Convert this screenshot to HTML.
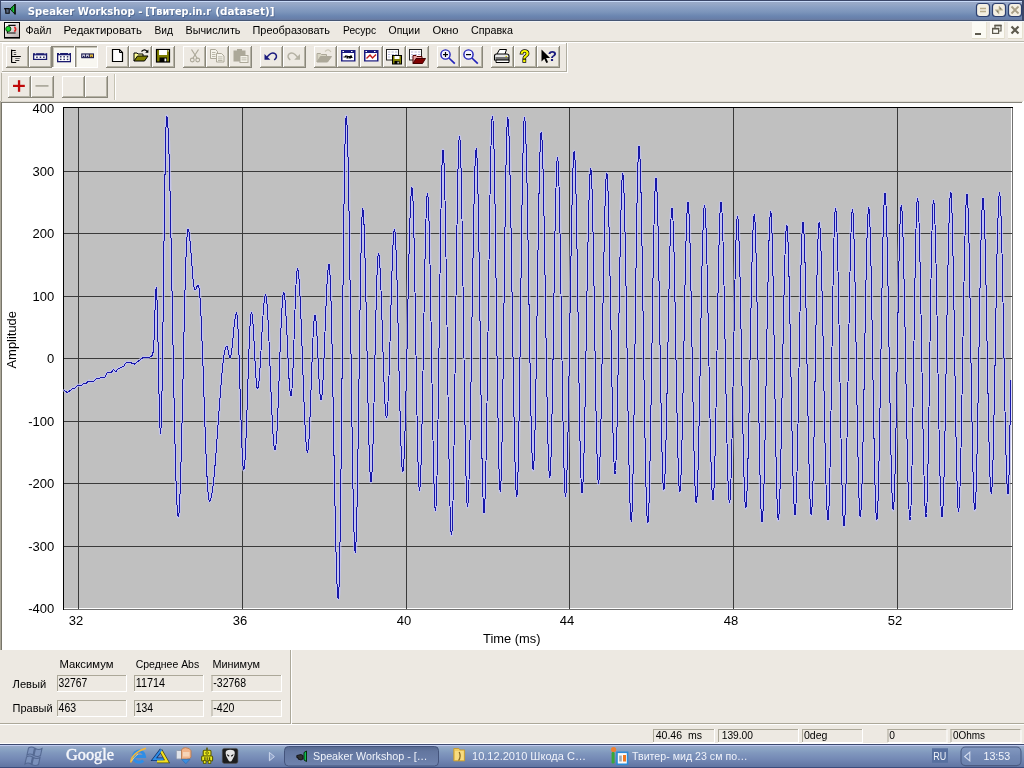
<!DOCTYPE html>
<html lang="ru"><head><meta charset="utf-8"><title>Speaker Workshop - [Твитер.in.r (dataset)]</title>
<style>
html,body{margin:0;padding:0;background:#ece9d8;overflow:hidden}
#screen{position:relative;width:1024px;height:768px;overflow:hidden;font-family:"Liberation Sans",sans-serif}
#screen>div{position:absolute}
#ov{position:absolute;left:0;top:0;will-change:transform}
text{white-space:pre}
</style></head><body><div id="screen">
<div style="left:0px;top:0px;width:1024px;height:768px;background:#ede9e2;"></div>
<div style="left:0px;top:0px;width:1024px;height:21px;background:linear-gradient(#3a4668 0px,#3a4668 1px,#c8daf8 1px,#c8daf8 2px,#98a8c8 2px,#9aaac8 3px,#8ba0c4 7px,#7c95bb 12px,#6b86b1 16px,#687ea8 19px,#6a7a9c 20px,#465674 20px,#465674 21px);"></div>
<div style="left:0px;top:0px;width:1px;height:21px;background:#3a4668;"></div>
<div style="left:1022px;top:0px;width:2px;height:21px;background:#3a4668;"></div>
<div style="left:0px;top:21px;width:1024px;height:20px;background:#ede9e2;"></div>
<div style="left:0px;top:21px;width:1024px;height:1px;background:#f2f4f6;"></div>
<div style="left:0px;top:41px;width:1024px;height:1px;background:#b9b6aa;"></div>
<div style="left:0px;top:42px;width:1024px;height:1px;background:#ffffff;"></div>
<div style="left:0px;top:43px;width:1024px;height:58px;background:#ede9e2;"></div>
<div style="left:0px;top:101px;width:1024px;height:549px;background:#ffffff;"></div>
<div style="left:0px;top:101px;width:1023px;height:1px;background:#dcd9d0;"></div>
<div style="left:0px;top:102px;width:1022px;height:1px;background:#85837a;"></div>
<div style="left:0px;top:101px;width:1px;height:549px;background:#aca899;"></div>
<div style="left:1px;top:102px;width:1px;height:548px;background:#77756a;"></div>
<div style="left:0px;top:650px;width:1024px;height:74px;background:#ede9e2;"></div>
<div style="left:0px;top:724px;width:1024px;height:19px;background:#ede9e2;"></div>
<div style="left:0px;top:723px;width:1024px;height:1px;background:#aca899;"></div>
<div style="left:0px;top:724px;width:1024px;height:1px;background:#ffffff;"></div>
<div style="left:0px;top:743px;width:1024px;height:1px;background:#ffffff;"></div>
<div style="left:0px;top:744px;width:1024px;height:24px;background:linear-gradient(#3e4a70 0px,#3e4a70 1px,#c0ccf0 1px,#c0ccf0 2px,#9aaaca 2px,#8ba4c4 5px,#8097bd 9px,#7489b5 15px,#6579a6 21px,#6076a2 23px,#3c4c7c 23px,#3c4c7c 24px);"></div>
<svg id="ov" width="1024" height="768" viewBox="0 0 1024 768">
<defs><linearGradient id="gdi" x1="0" y1="0" x2="1" y2="1"><stop offset="0" stop-color="#ffffff"/><stop offset="0.5" stop-color="#dcd6d4"/><stop offset="1" stop-color="#b8aeae"/></linearGradient><linearGradient id="gab" x1="0" y1="0" x2="0" y2="1"><stop offset="0" stop-color="#56688f"/><stop offset="0.25" stop-color="#63769f"/><stop offset="1" stop-color="#6f83ae"/></linearGradient><linearGradient id="gtr" x1="0" y1="0" x2="0" y2="1"><stop offset="0" stop-color="#8399c0"/><stop offset="0.5" stop-color="#7389b4"/><stop offset="1" stop-color="#6a80ac"/></linearGradient></defs>
<g><path d="M15 4.2 L15 14.2 L10 9 Z" fill="#18c838" stroke="#0a1a0a" stroke-width="1"/><rect x="14.4" y="4" width="1.3" height="10.4" fill="#0a0a0a"/><path d="M4.8 8.6 H9.2 V13.3 H5.8 V10.6 L4.8 8.6 Z" fill="#5a6a86" stroke="#0a0a0a" stroke-width="1.1"/><path d="M12.3 6.5 V11.8" stroke="#0a6a1a" stroke-width="0.9"/></g>
<text x="28.6" y="15.9" font-size="11.3" font-family='"DejaVu Sans", "Liberation Sans", sans-serif' font-weight="bold" fill="#34466f" text-anchor="start" textLength="114.7" lengthAdjust="spacingAndGlyphs" opacity="0.5">Speaker Workshop -</text>
<text x="27.8" y="15" font-size="11.3" font-family='"DejaVu Sans", "Liberation Sans", sans-serif' font-weight="bold" fill="#ffffff" text-anchor="start" textLength="114.7" lengthAdjust="spacingAndGlyphs" >Speaker Workshop -</text>
<text x="146.0" y="15.9" font-size="11.3" font-family='"DejaVu Sans", "Liberation Sans", sans-serif' font-weight="bold" fill="#34466f" text-anchor="start" textLength="65.8" lengthAdjust="spacingAndGlyphs" opacity="0.5">[Твитер.in.r</text>
<text x="145.2" y="15" font-size="11.3" font-family='"DejaVu Sans", "Liberation Sans", sans-serif' font-weight="bold" fill="#ffffff" text-anchor="start" textLength="65.8" lengthAdjust="spacingAndGlyphs" >[Твитер.in.r</text>
<text x="216.10000000000002" y="15.9" font-size="11.3" font-family='"DejaVu Sans", "Liberation Sans", sans-serif' font-weight="bold" fill="#34466f" text-anchor="start" textLength="59.2" lengthAdjust="spacingAndGlyphs" opacity="0.5">(dataset)]</text>
<text x="215.3" y="15" font-size="11.3" font-family='"DejaVu Sans", "Liberation Sans", sans-serif' font-weight="bold" fill="#ffffff" text-anchor="start" textLength="59.2" lengthAdjust="spacingAndGlyphs" >(dataset)]</text>
<rect x="976.5" y="3.5" width="13" height="13" rx="3" ry="3" fill="#f3efe2" stroke="#2c3f6f" stroke-width="1.2"/>
<rect x="992.5" y="3.5" width="13" height="13" rx="3" ry="3" fill="#f3efe2" stroke="#2c3f6f" stroke-width="1.2"/>
<rect x="1008.5" y="3.5" width="13" height="13" rx="3" ry="3" fill="#f3efe2" stroke="#2c3f6f" stroke-width="1.2"/>
<path d="M980 8.5h6M980 11.5h6" stroke="#b9ad8c" stroke-width="1.6" fill="none"/>
<path d="M999 5.8 L1003 10.2 L999 10.2 Z M999 14.2 L995 9.8 L999 9.8 Z" fill="#7d7966"/><path d="M995 10 H1003 M999 6 V14" stroke="#d8cfae" stroke-width="1" fill="none"/>
<path d="M1011.5 6.5 L1018.5 13.5 M1018.5 6.5 L1011.5 13.5" stroke="#a89f86" stroke-width="1.8" fill="none"/>
<rect x="4" y="22" width="16" height="16.6" fill="#000" />
<rect x="5" y="23" width="14" height="14" fill="url(#gdi)" />
<path d="M8.3 25.4 H15.6 M15.6 33 H7.4 V31" fill="none" stroke="#0a0a0a" stroke-width="1.1" />
<circle cx="8.3" cy="28.9" r="2.6" fill="#14d428" stroke="#0a3a0a" stroke-width="0.9"/>
<path d="M14.4 27 q2.6 2.2 0 4.6" fill="none" stroke="#e02424" stroke-width="1.7" />
<text x="25.5" y="34" font-size="11" font-family='"Liberation Sans", sans-serif' font-weight="normal" fill="#000" text-anchor="start" textLength="26.0" lengthAdjust="spacingAndGlyphs" >Файл</text>
<text x="63.5" y="34" font-size="11" font-family='"Liberation Sans", sans-serif' font-weight="normal" fill="#000" text-anchor="start" textLength="78.5" lengthAdjust="spacingAndGlyphs" >Редактировать</text>
<text x="154.5" y="34" font-size="11" font-family='"Liberation Sans", sans-serif' font-weight="normal" fill="#000" text-anchor="start" textLength="18.5" lengthAdjust="spacingAndGlyphs" >Вид</text>
<text x="185.5" y="34" font-size="11" font-family='"Liberation Sans", sans-serif' font-weight="normal" fill="#000" text-anchor="start" textLength="55.0" lengthAdjust="spacingAndGlyphs" >Вычислить</text>
<text x="252.5" y="34" font-size="11" font-family='"Liberation Sans", sans-serif' font-weight="normal" fill="#000" text-anchor="start" textLength="77.5" lengthAdjust="spacingAndGlyphs" >Преобразовать</text>
<text x="343" y="34" font-size="11" font-family='"Liberation Sans", sans-serif' font-weight="normal" fill="#000" text-anchor="start" textLength="33" lengthAdjust="spacingAndGlyphs" >Ресурс</text>
<text x="388.5" y="34" font-size="11" font-family='"Liberation Sans", sans-serif' font-weight="normal" fill="#000" text-anchor="start" textLength="31.5" lengthAdjust="spacingAndGlyphs" >Опции</text>
<text x="432.5" y="34" font-size="11" font-family='"Liberation Sans", sans-serif' font-weight="normal" fill="#000" text-anchor="start" textLength="26.0" lengthAdjust="spacingAndGlyphs" >Окно</text>
<text x="471" y="34" font-size="11" font-family='"Liberation Sans", sans-serif' font-weight="normal" fill="#000" text-anchor="start" textLength="42" lengthAdjust="spacingAndGlyphs" >Справка</text>
<rect x="972" y="22" width="15" height="17" fill="#fbfaf4" />
<rect x="972" y="38" width="15" height="1" fill="#e0dccb" />
<rect x="986" y="22" width="1" height="17" fill="#e6e2d2" />
<rect x="990" y="22" width="15" height="17" fill="#fbfaf4" />
<rect x="990" y="38" width="15" height="1" fill="#e0dccb" />
<rect x="1004" y="22" width="1" height="17" fill="#e6e2d2" />
<rect x="1008" y="22" width="15" height="17" fill="#fbfaf4" />
<rect x="1008" y="38" width="15" height="1" fill="#e0dccb" />
<rect x="1022" y="22" width="1" height="17" fill="#e6e2d2" />
<rect x="975" y="33" width="6" height="2" fill="#5d5a4e" />
<path d="M995 28 V25.6 H1001 V31 H999" stroke="#5d5a4e" stroke-width="1.2" fill="none"/><rect x="994.4" y="24.6" width="7.2" height="1.6" fill="#5d5a4e"/><rect x="992.6" y="28.6" width="6" height="4.8" stroke="#5d5a4e" stroke-width="1.2" fill="none"/><rect x="992" y="27.8" width="7.2" height="1.6" fill="#5d5a4e"/>
<path d="M1011.5 26.5 L1018.5 33.5 M1018.5 26.5 L1011.5 33.5" stroke="#5d5a4e" stroke-width="2.2" fill="none"/>
<rect x="2" y="43" width="565" height="1" fill="#ffffff" />
<rect x="2" y="71" width="565" height="1" fill="#b0ada0" />
<rect x="566" y="43" width="1" height="29" fill="#b0ada0" />
<rect x="567" y="43" width="1" height="30" fill="#ffffff" />
<rect x="2" y="44" width="1" height="27" fill="#ffffff" />
<rect x="6" y="46" width="23" height="22" fill="#ede9e2" />
<rect x="6" y="46" width="22" height="1" fill="#ffffff" />
<rect x="6" y="46" width="1" height="21" fill="#ffffff" />
<rect x="28" y="46" width="1" height="22" fill="#8a877b" />
<rect x="6" y="67" width="23" height="1" fill="#8a877b" />
<rect x="27" y="47" width="1" height="20" fill="#b5b2a4" />
<rect x="7" y="66" width="21" height="1" fill="#b5b2a4" />
<rect x="29" y="46" width="23" height="22" fill="#ede9e2" />
<rect x="29" y="46" width="22" height="1" fill="#ffffff" />
<rect x="29" y="46" width="1" height="21" fill="#ffffff" />
<rect x="51" y="46" width="1" height="22" fill="#8a877b" />
<rect x="29" y="67" width="23" height="1" fill="#8a877b" />
<rect x="50" y="47" width="1" height="20" fill="#b5b2a4" />
<rect x="30" y="66" width="21" height="1" fill="#b5b2a4" />
<rect x="52" y="46" width="23" height="22" fill="#f8f7f1" />
<rect x="52" y="46" width="23" height="1" fill="#8a877b" />
<rect x="52" y="46" width="1" height="22" fill="#8a877b" />
<rect x="53" y="47" width="21" height="1" fill="#c9c6b8" />
<rect x="53" y="47" width="1" height="20" fill="#c9c6b8" />
<rect x="74" y="46" width="1" height="22" fill="#ffffff" />
<rect x="52" y="67" width="23" height="1" fill="#ffffff" />
<rect x="75" y="46" width="23" height="22" fill="#f8f7f1" />
<rect x="75" y="46" width="23" height="1" fill="#8a877b" />
<rect x="75" y="46" width="1" height="22" fill="#8a877b" />
<rect x="76" y="47" width="21" height="1" fill="#c9c6b8" />
<rect x="76" y="47" width="1" height="20" fill="#c9c6b8" />
<rect x="97" y="46" width="1" height="22" fill="#ffffff" />
<rect x="75" y="67" width="23" height="1" fill="#ffffff" />
<rect x="106" y="46" width="23" height="22" fill="#ede9e2" />
<rect x="106" y="46" width="22" height="1" fill="#ffffff" />
<rect x="106" y="46" width="1" height="21" fill="#ffffff" />
<rect x="128" y="46" width="1" height="22" fill="#8a877b" />
<rect x="106" y="67" width="23" height="1" fill="#8a877b" />
<rect x="127" y="47" width="1" height="20" fill="#b5b2a4" />
<rect x="107" y="66" width="21" height="1" fill="#b5b2a4" />
<rect x="129" y="46" width="23" height="22" fill="#ede9e2" />
<rect x="129" y="46" width="22" height="1" fill="#ffffff" />
<rect x="129" y="46" width="1" height="21" fill="#ffffff" />
<rect x="151" y="46" width="1" height="22" fill="#8a877b" />
<rect x="129" y="67" width="23" height="1" fill="#8a877b" />
<rect x="150" y="47" width="1" height="20" fill="#b5b2a4" />
<rect x="130" y="66" width="21" height="1" fill="#b5b2a4" />
<rect x="152" y="46" width="23" height="22" fill="#ede9e2" />
<rect x="152" y="46" width="22" height="1" fill="#ffffff" />
<rect x="152" y="46" width="1" height="21" fill="#ffffff" />
<rect x="174" y="46" width="1" height="22" fill="#8a877b" />
<rect x="152" y="67" width="23" height="1" fill="#8a877b" />
<rect x="173" y="47" width="1" height="20" fill="#b5b2a4" />
<rect x="153" y="66" width="21" height="1" fill="#b5b2a4" />
<rect x="183" y="46" width="23" height="22" fill="#ede9e2" />
<rect x="183" y="46" width="22" height="1" fill="#ffffff" />
<rect x="183" y="46" width="1" height="21" fill="#ffffff" />
<rect x="205" y="46" width="1" height="22" fill="#8a877b" />
<rect x="183" y="67" width="23" height="1" fill="#8a877b" />
<rect x="204" y="47" width="1" height="20" fill="#b5b2a4" />
<rect x="184" y="66" width="21" height="1" fill="#b5b2a4" />
<rect x="206" y="46" width="23" height="22" fill="#ede9e2" />
<rect x="206" y="46" width="22" height="1" fill="#ffffff" />
<rect x="206" y="46" width="1" height="21" fill="#ffffff" />
<rect x="228" y="46" width="1" height="22" fill="#8a877b" />
<rect x="206" y="67" width="23" height="1" fill="#8a877b" />
<rect x="227" y="47" width="1" height="20" fill="#b5b2a4" />
<rect x="207" y="66" width="21" height="1" fill="#b5b2a4" />
<rect x="229" y="46" width="23" height="22" fill="#ede9e2" />
<rect x="229" y="46" width="22" height="1" fill="#ffffff" />
<rect x="229" y="46" width="1" height="21" fill="#ffffff" />
<rect x="251" y="46" width="1" height="22" fill="#8a877b" />
<rect x="229" y="67" width="23" height="1" fill="#8a877b" />
<rect x="250" y="47" width="1" height="20" fill="#b5b2a4" />
<rect x="230" y="66" width="21" height="1" fill="#b5b2a4" />
<rect x="260" y="46" width="23" height="22" fill="#ede9e2" />
<rect x="260" y="46" width="22" height="1" fill="#ffffff" />
<rect x="260" y="46" width="1" height="21" fill="#ffffff" />
<rect x="282" y="46" width="1" height="22" fill="#8a877b" />
<rect x="260" y="67" width="23" height="1" fill="#8a877b" />
<rect x="281" y="47" width="1" height="20" fill="#b5b2a4" />
<rect x="261" y="66" width="21" height="1" fill="#b5b2a4" />
<rect x="283" y="46" width="23" height="22" fill="#ede9e2" />
<rect x="283" y="46" width="22" height="1" fill="#ffffff" />
<rect x="283" y="46" width="1" height="21" fill="#ffffff" />
<rect x="305" y="46" width="1" height="22" fill="#8a877b" />
<rect x="283" y="67" width="23" height="1" fill="#8a877b" />
<rect x="304" y="47" width="1" height="20" fill="#b5b2a4" />
<rect x="284" y="66" width="21" height="1" fill="#b5b2a4" />
<rect x="314" y="46" width="23" height="22" fill="#ede9e2" />
<rect x="314" y="46" width="22" height="1" fill="#ffffff" />
<rect x="314" y="46" width="1" height="21" fill="#ffffff" />
<rect x="336" y="46" width="1" height="22" fill="#8a877b" />
<rect x="314" y="67" width="23" height="1" fill="#8a877b" />
<rect x="335" y="47" width="1" height="20" fill="#b5b2a4" />
<rect x="315" y="66" width="21" height="1" fill="#b5b2a4" />
<rect x="337" y="46" width="23" height="22" fill="#ede9e2" />
<rect x="337" y="46" width="22" height="1" fill="#ffffff" />
<rect x="337" y="46" width="1" height="21" fill="#ffffff" />
<rect x="359" y="46" width="1" height="22" fill="#8a877b" />
<rect x="337" y="67" width="23" height="1" fill="#8a877b" />
<rect x="358" y="47" width="1" height="20" fill="#b5b2a4" />
<rect x="338" y="66" width="21" height="1" fill="#b5b2a4" />
<rect x="360" y="46" width="23" height="22" fill="#ede9e2" />
<rect x="360" y="46" width="22" height="1" fill="#ffffff" />
<rect x="360" y="46" width="1" height="21" fill="#ffffff" />
<rect x="382" y="46" width="1" height="22" fill="#8a877b" />
<rect x="360" y="67" width="23" height="1" fill="#8a877b" />
<rect x="381" y="47" width="1" height="20" fill="#b5b2a4" />
<rect x="361" y="66" width="21" height="1" fill="#b5b2a4" />
<rect x="383" y="46" width="23" height="22" fill="#ede9e2" />
<rect x="383" y="46" width="22" height="1" fill="#ffffff" />
<rect x="383" y="46" width="1" height="21" fill="#ffffff" />
<rect x="405" y="46" width="1" height="22" fill="#8a877b" />
<rect x="383" y="67" width="23" height="1" fill="#8a877b" />
<rect x="404" y="47" width="1" height="20" fill="#b5b2a4" />
<rect x="384" y="66" width="21" height="1" fill="#b5b2a4" />
<rect x="406" y="46" width="23" height="22" fill="#ede9e2" />
<rect x="406" y="46" width="22" height="1" fill="#ffffff" />
<rect x="406" y="46" width="1" height="21" fill="#ffffff" />
<rect x="428" y="46" width="1" height="22" fill="#8a877b" />
<rect x="406" y="67" width="23" height="1" fill="#8a877b" />
<rect x="427" y="47" width="1" height="20" fill="#b5b2a4" />
<rect x="407" y="66" width="21" height="1" fill="#b5b2a4" />
<rect x="437" y="46" width="23" height="22" fill="#ede9e2" />
<rect x="437" y="46" width="22" height="1" fill="#ffffff" />
<rect x="437" y="46" width="1" height="21" fill="#ffffff" />
<rect x="459" y="46" width="1" height="22" fill="#8a877b" />
<rect x="437" y="67" width="23" height="1" fill="#8a877b" />
<rect x="458" y="47" width="1" height="20" fill="#b5b2a4" />
<rect x="438" y="66" width="21" height="1" fill="#b5b2a4" />
<rect x="460" y="46" width="23" height="22" fill="#ede9e2" />
<rect x="460" y="46" width="22" height="1" fill="#ffffff" />
<rect x="460" y="46" width="1" height="21" fill="#ffffff" />
<rect x="482" y="46" width="1" height="22" fill="#8a877b" />
<rect x="460" y="67" width="23" height="1" fill="#8a877b" />
<rect x="481" y="47" width="1" height="20" fill="#b5b2a4" />
<rect x="461" y="66" width="21" height="1" fill="#b5b2a4" />
<rect x="491" y="46" width="23" height="22" fill="#ede9e2" />
<rect x="491" y="46" width="22" height="1" fill="#ffffff" />
<rect x="491" y="46" width="1" height="21" fill="#ffffff" />
<rect x="513" y="46" width="1" height="22" fill="#8a877b" />
<rect x="491" y="67" width="23" height="1" fill="#8a877b" />
<rect x="512" y="47" width="1" height="20" fill="#b5b2a4" />
<rect x="492" y="66" width="21" height="1" fill="#b5b2a4" />
<rect x="514" y="46" width="23" height="22" fill="#ede9e2" />
<rect x="514" y="46" width="22" height="1" fill="#ffffff" />
<rect x="514" y="46" width="1" height="21" fill="#ffffff" />
<rect x="536" y="46" width="1" height="22" fill="#8a877b" />
<rect x="514" y="67" width="23" height="1" fill="#8a877b" />
<rect x="535" y="47" width="1" height="20" fill="#b5b2a4" />
<rect x="515" y="66" width="21" height="1" fill="#b5b2a4" />
<rect x="537" y="46" width="23" height="22" fill="#ede9e2" />
<rect x="537" y="46" width="22" height="1" fill="#ffffff" />
<rect x="537" y="46" width="1" height="21" fill="#ffffff" />
<rect x="559" y="46" width="1" height="22" fill="#8a877b" />
<rect x="537" y="67" width="23" height="1" fill="#8a877b" />
<rect x="558" y="47" width="1" height="20" fill="#b5b2a4" />
<rect x="538" y="66" width="21" height="1" fill="#b5b2a4" />
<rect x="11" y="49.6" width="1.2" height="13.2" fill="#000" />
<rect x="12" y="50" width="3.6999999999999993" height="1.0" fill="#000" />
<rect x="13.7" y="52" width="2.5" height="1.0" fill="#707070" />
<rect x="13.7" y="54" width="2.5" height="1.0" fill="#404040" />
<rect x="12" y="56" width="8.8" height="1.0" fill="#000" />
<rect x="15.2" y="58" width="4.600000000000001" height="1.0" fill="#707070" />
<rect x="15.2" y="60" width="4.100000000000001" height="1.0" fill="#303030" />
<rect x="12" y="62" width="4.199999999999999" height="1.0" fill="#000" />
<rect x="33" y="53.2" width="14.2" height="6.8" fill="#1a1a6e" />
<rect x="34.3" y="55.4" width="11.6" height="3.4" fill="#ffffff" />
<rect x="36.2" y="56.5" width="1.5" height="1.5" fill="#2a2a5e" />
<rect x="39.7" y="56.5" width="1.5" height="1.5" fill="#2a2a5e" />
<rect x="43.1" y="56.5" width="1.5" height="1.5" fill="#2a2a5e" />
<rect x="35" y="53.2" width="1.1" height="1" fill="#e8e8f4" />
<rect x="44.4" y="53.2" width="1.1" height="1" fill="#e8e8f4" />
<rect x="57" y="53" width="14" height="9.3" fill="#1a1a6e" />
<rect x="58.3" y="55.3" width="11.5" height="5.7" fill="#ffffff" />
<rect x="60" y="56.1" width="1.5" height="1.4" fill="#2a2a5e" />
<rect x="60" y="58.7" width="1.5" height="1.4" fill="#2a2a5e" />
<rect x="63.4" y="56.1" width="1.5" height="1.4" fill="#2a2a5e" />
<rect x="63.4" y="58.7" width="1.5" height="1.4" fill="#2a2a5e" />
<rect x="66.8" y="56.1" width="1.5" height="1.4" fill="#2a2a5e" />
<rect x="66.8" y="58.7" width="1.5" height="1.4" fill="#2a2a5e" />
<rect x="59" y="53" width="1.1" height="1" fill="#e8e8f4" />
<rect x="68.2" y="53" width="1.1" height="1" fill="#e8e8f4" />
<rect x="81.2" y="53.4" width="12.8" height="4.8" fill="#1a1a4e" />
<rect x="82.3" y="54.5" width="2.8" height="2.6" fill="#e0e0ee" />
<rect x="86" y="54.5" width="2.8" height="2.6" fill="#e0e0ee" />
<rect x="89.8" y="54.5" width="3.2" height="2.6" fill="#e8c040" />
<rect x="83" y="55.8" width="1.4" height="1.3" fill="#1a1a4e" />
<rect x="86.7" y="55.8" width="1.4" height="1.3" fill="#1a1a4e" />
<rect x="90.7" y="55.8" width="1.4" height="1.3" fill="#7a5a10" />
<path d="M112.5 49.5 h7 l3 3 v9 h-10 Z" fill="#ffffff" stroke="#000" stroke-width="1.2" />
<path d="M119.5 49.5 v3 h3" fill="none" stroke="#000" stroke-width="1" />
<path d="M134 61 v-8 h3 l1 1 h5 v2" fill="#ffff99" stroke="#000" stroke-width="1" />
<path d="M134 61 l3.5 -5 h10.5 l-3.5 5 Z" fill="#808000" stroke="#000" stroke-width="1" />
<path d="M141.5 51.5 q3.5 -3.5 6 0.5" fill="none" stroke="#000" stroke-width="1.1" />
<path d="M148.4 49.6 v3.2 h-3.2 Z" fill="#000" stroke="none" stroke-width="1" />
<rect x="156.5" y="49.5" width="13" height="12.5" fill="#808000" stroke="#000" stroke-width="1.2"/>
<rect x="159" y="50" width="8" height="5" fill="#ffffff" />
<rect x="159.5" y="57.5" width="7.5" height="4.5" fill="#000" />
<rect x="164.5" y="58.5" width="1.8" height="2.8" fill="#fff" />
<rect x="167.6" y="50.3" width="1.2" height="1.2" fill="#fff" />
<path d="M191.5 49.5 L197 58 M198.5 49.5 L193 58" fill="none" stroke="#aca899" stroke-width="1.2" />
<circle cx="192.3" cy="60" r="1.9" fill="none" stroke="#aca899" stroke-width="1.1"/><circle cx="197.7" cy="60" r="1.9" fill="none" stroke="#aca899" stroke-width="1.1"/>
<path d="M210.5 49.5 h5 l2 2 v7 h-7 Z" fill="#f4f2ea" stroke="#aca899" stroke-width="1" />
<path d="M216.5 53.5 h5 l2.5 2.5 v6 h-7.5 Z" fill="#f4f2ea" stroke="#aca899" stroke-width="1" />
<rect x="212" y="52" width="3.5" height="0.8" fill="#aca899" />
<rect x="212" y="54" width="3.5" height="0.8" fill="#aca899" />
<rect x="212" y="56" width="3.5" height="0.8" fill="#aca899" />
<rect x="218" y="56.5" width="4.5" height="0.8" fill="#aca899" />
<rect x="218" y="58.5" width="4.5" height="0.8" fill="#aca899" />
<rect x="218" y="60" width="4.5" height="0.8" fill="#aca899" />
<rect x="233.5" y="50.5" width="12" height="11" fill="#aca899" />
<rect x="237" y="49" width="5" height="2.2" fill="#aca899" />
<rect x="240" y="55.5" width="8" height="7" fill="#f4f2ea" stroke="#aca899" stroke-width="1"/>
<rect x="241.5" y="57.5" width="5" height="0.8" fill="#aca899" />
<rect x="241.5" y="59.5" width="5" height="0.8" fill="#aca899" />
<path d="M267 57 L269.5 54.5 Q272.5 51.6 275.5 54 Q278 57 274.2 60" fill="none" stroke="#1a1a7e" stroke-width="1.5" />
<path d="M264.5 54 V59.8 H270.3 Z" fill="#1a1a7e" stroke="none" stroke-width="1" />
<path d="M297.5 57 L295 54.5 Q292 51.6 289 54 Q286.5 57 290.3 60" fill="none" stroke="#b5b2a4" stroke-width="1.5" />
<path d="M300 54 V59.8 H294.2 Z" fill="#b5b2a4" stroke="none" stroke-width="1" />
<path d="M317 62 v-8.5 h3.5 l1 1 h5 v2" fill="#d8d5c4" stroke="#aca899" stroke-width="1" />
<path d="M317 62 l3.5 -5.5 h11 l-4 5.5 Z" fill="#aca899" stroke="#aca899" stroke-width="1" />
<path d="M325 51.5 q3.5 -3.5 6 0.5" fill="none" stroke="#c9c5b5" stroke-width="1.1" />
<rect x="341" y="50" width="14.5" height="11.5" fill="#1a1a7e" />
<rect x="342.5" y="53" width="11.5" height="7.3" fill="#fff" />
<rect x="342.5" y="51" width="1.5" height="1" fill="#fff" />
<rect x="351" y="51" width="1.5" height="1" fill="#fff" />
<path d="M343.5 57 h2 v-1 h1.5 v2 h1 v-1.5 h1.5 v1.5 h1 v-2 h1 v1.5 h1" fill="none" stroke="#000" stroke-width="1.1" />
<rect x="364" y="50" width="14.5" height="11.5" fill="#1a1a7e" />
<rect x="365.5" y="53" width="11.5" height="7.3" fill="#fff" />
<rect x="365.5" y="51" width="1.5" height="1" fill="#fff" />
<rect x="374" y="51" width="1.5" height="1" fill="#fff" />
<path d="M366.5 58.5 l3.5 -3.5 l2.5 3 l3.5 -3.5" fill="none" stroke="#c01818" stroke-width="1.4" />
<rect x="386.5" y="49.5" width="12" height="10.5" fill="#fff" stroke="#222" stroke-width="1"/>
<rect x="388.0" y="51.5" width="2.3" height="1" fill="#b8b8d8" />
<rect x="391.5" y="51.5" width="2.3" height="1" fill="#b8b8d8" />
<rect x="395.0" y="51.5" width="2.3" height="1" fill="#b8b8d8" />
<rect x="388.0" y="54.0" width="2.3" height="1" fill="#b8b8d8" />
<rect x="391.5" y="54.0" width="2.3" height="1" fill="#b8b8d8" />
<rect x="395.0" y="54.0" width="2.3" height="1" fill="#b8b8d8" />
<rect x="388.0" y="56.5" width="2.3" height="1" fill="#b8b8d8" />
<rect x="391.5" y="56.5" width="2.3" height="1" fill="#b8b8d8" />
<rect x="395.0" y="56.5" width="2.3" height="1" fill="#b8b8d8" />
<rect x="392.5" y="55.5" width="9" height="8.5" fill="#808000" stroke="#000" stroke-width="1"/>
<rect x="394.5" y="56" width="5" height="3" fill="#fff" />
<rect x="394.5" y="61" width="5" height="3" fill="#000" />
<rect x="397.5" y="61.7" width="1.2" height="1.8" fill="#fff" />
<rect x="409.5" y="49.5" width="12" height="10.5" fill="#fff" stroke="#222" stroke-width="1"/>
<rect x="411.0" y="51.5" width="2.3" height="1" fill="#b8b8d8" />
<rect x="414.5" y="51.5" width="2.3" height="1" fill="#b8b8d8" />
<rect x="418.0" y="51.5" width="2.3" height="1" fill="#b8b8d8" />
<rect x="411.0" y="54.0" width="2.3" height="1" fill="#b8b8d8" />
<rect x="414.5" y="54.0" width="2.3" height="1" fill="#b8b8d8" />
<rect x="418.0" y="54.0" width="2.3" height="1" fill="#b8b8d8" />
<rect x="411.0" y="56.5" width="2.3" height="1" fill="#b8b8d8" />
<rect x="414.5" y="56.5" width="2.3" height="1" fill="#b8b8d8" />
<rect x="418.0" y="56.5" width="2.3" height="1" fill="#b8b8d8" />
<path d="M413 63.5 v-8 h3 l1 1 h5 v2" fill="#e8a0a0" stroke="#500" stroke-width="1" />
<path d="M413 63.5 l3 -5 h9.5 l-3 5 Z" fill="#800000" stroke="#400" stroke-width="1" />
<circle cx="445.5" cy="54.5" r="4.6" fill="#f4f4ff" stroke="#2222bb" stroke-width="1.4"/>
<path d="M448.9 58 L454.8 63.6" fill="none" stroke="#2222bb" stroke-width="1.7" />
<rect x="443.0" y="54" width="5" height="1.2" fill="#000" />
<rect x="444.9" y="52" width="1.2" height="5" fill="#000" />
<circle cx="468.5" cy="54.5" r="4.6" fill="#f4f4ff" stroke="#2222bb" stroke-width="1.4"/>
<path d="M471.9 58 L477.8 63.6" fill="none" stroke="#2222bb" stroke-width="1.7" />
<rect x="466.0" y="54" width="5" height="1.2" fill="#000" />
<path d="M497 54 l2.5 -4.5 h7 l-1.5 4.5" fill="#fff" stroke="#000" stroke-width="1" />
<path d="M494.5 56 q0 -2 2 -2 h10 q2.5 0 2.5 2 v4 h-14.5 Z" fill="#e8e8e8" stroke="#000" stroke-width="1.1" />
<path d="M496 60 h13 v2.5 h-13 Z" fill="#fff" stroke="#000" stroke-width="1" />
<rect x="495.5" y="57.5" width="13.5" height="1" fill="#000" />
<rect x="505.5" y="56" width="1.5" height="1" fill="#d0d000" />
<text x="519.8" y="62" font-size="16" font-family='"Liberation Sans", sans-serif' font-weight="bold" fill="#fafa00" text-anchor="start" stroke="#000" stroke-width="1.5" paint-order="stroke">?</text>
<path d="M541.5 49.5 v12 l2.8 -2.8 l2 4.3 l1.8 -0.8 l-2 -4.2 h4 Z" fill="#000" stroke="none" stroke-width="1" />
<text x="547.8" y="61" font-size="15" font-family='"Liberation Sans", sans-serif' font-weight="bold" fill="#1a1a7e" text-anchor="start" >?</text>
<rect x="2" y="72" width="566" height="1" fill="#ffffff" />
<rect x="114" y="74" width="1" height="26" fill="#c5c2b2" />
<rect x="115" y="74" width="1" height="26" fill="#ffffff" />
<rect x="8" y="76" width="23" height="22" fill="#ede9e2" />
<rect x="8" y="76" width="22" height="1" fill="#ffffff" />
<rect x="8" y="76" width="1" height="21" fill="#ffffff" />
<rect x="30" y="76" width="1" height="22" fill="#8a877b" />
<rect x="8" y="97" width="23" height="1" fill="#8a877b" />
<rect x="29" y="77" width="1" height="20" fill="#b5b2a4" />
<rect x="9" y="96" width="21" height="1" fill="#b5b2a4" />
<rect x="31" y="76" width="23" height="22" fill="#ede9e2" />
<rect x="31" y="76" width="22" height="1" fill="#ffffff" />
<rect x="31" y="76" width="1" height="21" fill="#ffffff" />
<rect x="53" y="76" width="1" height="22" fill="#8a877b" />
<rect x="31" y="97" width="23" height="1" fill="#8a877b" />
<rect x="52" y="77" width="1" height="20" fill="#b5b2a4" />
<rect x="32" y="96" width="21" height="1" fill="#b5b2a4" />
<rect x="62" y="76" width="23" height="22" fill="#ede9e2" />
<rect x="62" y="76" width="22" height="1" fill="#ffffff" />
<rect x="62" y="76" width="1" height="21" fill="#ffffff" />
<rect x="84" y="76" width="1" height="22" fill="#8a877b" />
<rect x="62" y="97" width="23" height="1" fill="#8a877b" />
<rect x="83" y="77" width="1" height="20" fill="#b5b2a4" />
<rect x="63" y="96" width="21" height="1" fill="#b5b2a4" />
<rect x="85" y="76" width="23" height="22" fill="#ede9e2" />
<rect x="85" y="76" width="22" height="1" fill="#ffffff" />
<rect x="85" y="76" width="1" height="21" fill="#ffffff" />
<rect x="107" y="76" width="1" height="22" fill="#8a877b" />
<rect x="85" y="97" width="23" height="1" fill="#8a877b" />
<rect x="106" y="77" width="1" height="20" fill="#b5b2a4" />
<rect x="86" y="96" width="21" height="1" fill="#b5b2a4" />
<rect x="13" y="84.8" width="11.8" height="2.2" fill="#c00808" />
<rect x="17.9" y="80.2" width="2.3" height="11.6" fill="#c00808" />
<rect x="35.5" y="85" width="13" height="1.8" fill="#aeab9e" />
<rect x="1" y="73" width="1" height="28" fill="#b5b2a4" />
<rect x="64" y="108" width="947" height="500" fill="#c0c0c0" />
<rect x="63" y="107" width="950" height="1" fill="#000" />
<rect x="63" y="107" width="1" height="503" fill="#000" />
<rect x="64" y="608" width="948" height="1" fill="#ffffff" />
<rect x="1011" y="108" width="1" height="501" fill="#ffffff" />
<rect x="64" y="609" width="949" height="1" fill="#707070" />
<rect x="1012" y="108" width="1" height="502" fill="#707070" />
<rect x="64" y="171.0" width="948" height="1" fill="#3a3a3a" />
<rect x="64" y="233.0" width="948" height="1" fill="#3a3a3a" />
<rect x="64" y="296.0" width="948" height="1" fill="#3a3a3a" />
<rect x="64" y="358.0" width="948" height="1" fill="#3a3a3a" />
<rect x="64" y="421.0" width="948" height="1" fill="#3a3a3a" />
<rect x="64" y="483.0" width="948" height="1" fill="#3a3a3a" />
<rect x="64" y="546.0" width="948" height="1" fill="#3a3a3a" />
<rect x="78.0" y="108" width="1" height="501" fill="#3a3a3a" />
<rect x="242.0" y="108" width="1" height="501" fill="#3a3a3a" />
<rect x="406.0" y="108" width="1" height="501" fill="#3a3a3a" />
<rect x="569.0" y="108" width="1" height="501" fill="#3a3a3a" />
<rect x="733.0" y="108" width="1" height="501" fill="#3a3a3a" />
<rect x="897.0" y="108" width="1" height="501" fill="#3a3a3a" />
<polyline points="63.6,391.5 64.3,390.5 67.5,392.6 70.0,390.6 72.9,388.3 74.5,389.0 76.0,386.8 78.8,385.1 81.0,385.8 83.0,384.0 85.8,383.5 89.0,380.8 91.0,382.0 93.3,381.4 96.5,378.7 100.0,378.0 105.1,377.0 107.3,372.8 111.6,372.2 113.2,369.5 115.9,371.7 118.5,368.5 123.9,366.3 125.5,363.1 128.7,362.0 131.0,362.8 134.1,364.2 138.4,361.0 143.8,357.2 148.1,357.7 151.8,356.1 153.2,352.0 153.7,347.7 154.2,335.9 154.7,319.8 155.2,303.6 155.7,291.8 156.2,287.5 156.8,293.1 157.3,308.9 157.8,332.6 158.4,360.6 158.9,388.6 159.4,412.3 160.0,428.2 160.5,433.8 161.0,428.3 161.5,412.5 162.1,387.2 162.6,354.3 163.1,316.0 163.6,274.9 164.1,233.8 164.7,195.4 165.2,162.5 165.7,137.3 166.2,121.4 166.8,116.0 167.2,117.9 167.8,123.4 168.2,132.6 168.8,145.2 169.2,161.0 169.8,179.6 170.2,200.9 170.8,224.3 171.2,249.4 171.8,275.7 172.2,302.8 172.8,330.2 173.2,357.3 173.8,383.6 174.2,408.7 174.8,432.1 175.2,453.4 175.8,472.0 176.2,487.8 176.8,500.4 177.2,509.6 177.8,515.1 178.2,517.0 178.8,515.0 179.3,509.2 179.8,499.6 180.3,486.6 180.8,470.5 181.3,451.8 181.8,430.8 182.4,408.3 182.9,384.9 183.4,361.1 183.9,337.7 184.4,315.2 184.9,294.2 185.4,275.5 185.9,259.4 186.5,246.4 187.0,236.8 187.5,231.0 188.0,229.0 188.5,229.8 189.0,232.0 189.5,235.7 190.0,240.5 190.5,246.3 191.0,252.7 191.5,259.5 192.0,266.3 192.5,272.7 193.0,278.5 193.5,283.3 194.0,287.0 194.5,289.2 195.0,290.0 195.5,289.7 196.1,288.8 196.6,287.5 197.2,286.2 197.7,285.3 198.2,285.0 198.8,286.1 199.3,289.4 199.8,294.8 200.3,302.2 200.8,311.4 201.3,322.3 201.8,334.7 202.3,348.2 202.9,362.7 203.4,377.7 203.9,393.1 204.4,408.5 204.9,423.6 205.4,438.0 205.9,451.6 206.4,463.9 206.9,474.8 207.5,484.1 208.0,491.5 208.5,496.9 209.0,500.1 209.5,501.2 210.0,500.9 210.5,499.9 211.0,498.3 211.5,496.0 212.0,493.1 212.5,489.6 213.1,485.6 213.6,481.0 214.1,475.9 214.6,470.4 215.1,464.5 215.6,458.2 216.1,451.7 216.6,444.9 217.1,437.9 217.6,430.8 218.1,423.6 218.6,416.5 219.1,409.4 219.6,402.4 220.2,395.6 220.7,389.0 221.2,382.8 221.7,376.8 222.2,371.3 222.7,366.3 223.2,361.7 223.7,357.6 224.2,354.1 224.7,351.2 225.2,349.0 225.7,347.3 226.2,346.3 226.8,346.0 227.3,346.8 227.8,348.9 228.4,351.8 228.9,354.6 229.5,356.7 230.0,357.5 230.5,356.9 231.0,355.0 231.5,351.9 232.0,347.9 232.5,343.1 233.0,337.9 233.5,332.6 234.0,327.4 234.5,322.6 235.0,318.6 235.5,315.5 236.0,313.6 236.5,313.0 237.0,315.0 237.5,320.8 238.1,330.1 238.6,342.6 239.1,357.4 239.6,374.0 240.1,391.5 240.6,409.0 241.2,425.6 241.7,440.4 242.2,452.9 242.7,462.2 243.2,468.0 243.8,470.0 244.3,468.3 244.8,463.2 245.3,455.0 245.8,443.9 246.3,430.6 246.8,415.6 247.4,399.5 247.9,383.0 248.4,366.9 248.9,351.9 249.4,338.6 249.9,327.5 250.5,319.3 251.0,314.2 251.5,312.5 252.0,313.8 252.5,317.6 253.0,323.7 253.5,331.6 254.0,340.8 254.5,350.6 255.0,360.5 255.5,369.7 256.0,377.6 256.5,383.6 257.0,387.5 257.5,388.8 258.0,387.8 258.5,385.2 259.0,380.9 259.5,375.0 260.0,367.9 260.5,359.8 261.0,351.0 261.5,341.9 262.0,332.7 262.5,323.9 263.0,315.8 263.5,308.7 264.0,302.9 264.5,298.6 265.0,295.9 265.5,295.0 266.0,296.1 266.5,299.2 267.0,304.3 267.5,311.3 268.0,320.0 268.5,330.1 269.0,341.4 269.5,353.5 270.0,366.1 270.5,378.9 271.0,391.5 271.5,403.6 272.0,414.9 272.5,425.0 273.0,433.7 273.5,440.7 274.0,445.8 274.5,448.9 275.0,450.0 275.5,448.7 276.0,444.7 276.5,438.2 277.1,429.4 277.6,418.7 278.1,406.4 278.6,392.8 279.1,378.5 279.6,364.0 280.1,349.7 280.7,336.1 281.2,323.8 281.7,313.1 282.2,304.3 282.7,297.8 283.2,293.8 283.8,292.5 284.3,293.8 284.8,297.6 285.3,303.8 285.8,312.0 286.3,321.8 286.9,332.7 287.4,344.2 287.9,355.8 288.4,366.7 288.9,376.5 289.4,384.7 290.0,390.9 290.5,394.7 291.0,396.0 291.5,394.2 292.0,388.7 292.5,380.0 293.0,368.5 293.5,354.9 294.0,340.0 294.5,324.7 295.0,309.8 295.5,296.2 296.0,284.8 296.5,276.0 297.0,270.6 297.5,268.8 298.0,269.9 298.5,273.2 299.0,278.7 299.5,286.2 300.0,295.6 300.5,306.5 301.0,318.8 301.5,332.1 302.0,346.0 302.5,360.4 303.0,374.7 303.5,388.7 304.0,402.0 304.5,414.2 305.0,425.2 305.5,434.5 306.0,442.0 306.5,447.5 307.0,450.9 307.5,452.0 308.0,450.5 308.5,446.1 309.0,438.9 309.5,429.3 310.0,417.8 310.5,404.7 311.0,390.7 311.5,376.3 312.0,362.3 312.5,349.2 313.0,337.7 313.5,328.1 314.0,320.9 314.5,316.5 315.0,315.0 315.5,316.4 316.0,320.7 316.5,327.4 317.0,336.2 317.5,346.5 318.0,357.5 318.5,368.5 319.0,378.8 319.5,387.6 320.0,394.3 320.5,398.6 321.0,400.0 321.5,398.7 322.0,394.8 322.5,388.6 323.0,380.2 323.5,369.9 324.0,358.2 324.5,345.5 325.0,332.2 325.5,319.0 326.0,306.3 326.5,294.6 327.0,284.3 327.5,275.9 328.0,269.7 328.5,265.8 329.0,264.5 329.5,267.0 330.0,274.6 330.5,286.9 331.1,303.6 331.6,324.2 332.1,348.1 332.6,374.5 333.1,402.6 333.6,431.6 334.1,460.6 334.7,488.8 335.2,515.2 335.7,539.1 336.2,559.7 336.7,576.4 337.2,588.7 337.7,596.2 338.2,598.8 338.8,594.1 339.2,580.4 339.8,558.1 340.2,528.1 340.8,491.5 341.2,449.8 341.8,404.6 342.2,357.5 342.8,310.4 343.2,265.2 343.8,223.5 344.2,186.9 344.8,156.9 345.2,134.6 345.8,120.9 346.2,116.2 346.8,119.6 347.2,129.4 347.8,145.5 348.2,167.3 348.8,194.2 349.2,225.3 349.8,259.8 350.2,296.5 350.8,334.4 351.2,372.3 351.8,409.0 352.2,443.4 352.8,474.6 353.2,501.5 353.8,523.3 354.2,539.3 354.8,549.2 355.2,552.5 355.8,548.7 356.2,537.6 356.8,519.7 357.2,495.6 357.8,466.6 358.2,433.7 358.8,398.6 359.2,362.7 359.8,327.5 360.2,294.7 360.8,265.6 361.2,241.6 361.8,223.6 362.2,212.5 362.8,208.8 363.3,211.4 363.8,219.1 364.3,231.8 364.8,248.8 365.3,269.5 365.8,293.1 366.4,318.7 366.9,345.4 367.4,372.0 367.9,397.7 368.4,421.3 368.9,442.0 369.5,459.0 370.0,471.6 370.5,479.4 371.0,482.0 371.5,479.5 372.0,472.1 372.5,460.2 373.0,444.2 373.5,424.9 374.0,403.1 374.5,379.8 375.0,355.9 375.5,332.6 376.0,310.8 376.5,291.5 377.0,275.5 377.5,263.6 378.0,256.2 378.5,253.8 379.0,255.3 379.5,260.0 380.0,267.6 380.5,277.8 381.0,290.2 381.5,304.4 382.0,319.9 382.5,335.9 383.0,351.9 383.5,367.3 384.0,381.5 384.5,393.9 385.0,404.2 385.5,411.7 386.0,416.4 386.5,418.0 387.0,416.2 387.5,410.8 388.0,402.1 388.5,390.4 389.0,376.1 389.5,359.8 390.0,342.1 390.5,323.8 391.0,305.4 391.5,287.7 392.0,271.4 392.5,257.1 393.0,245.4 393.5,236.7 394.0,231.3 394.5,229.5 395.0,231.8 395.5,238.7 396.0,249.9 396.6,265.0 397.1,283.4 397.6,304.3 398.1,327.1 398.6,350.8 399.1,374.4 399.7,397.2 400.2,418.1 400.7,436.5 401.2,451.6 401.7,462.8 402.2,469.7 402.8,472.0 403.3,469.8 403.8,463.4 404.3,452.9 404.8,438.7 405.3,421.2 405.8,400.9 406.3,378.4 406.9,354.5 407.4,329.8 407.9,305.0 408.4,281.1 408.9,258.6 409.4,238.3 409.9,220.8 410.5,206.6 411.0,196.1 411.5,189.7 412.0,187.5 412.5,190.8 413.0,200.6 413.5,216.5 414.0,237.7 414.5,263.3 415.0,292.3 415.5,323.3 416.0,355.0 416.5,386.0 417.0,414.9 417.5,440.6 418.0,461.8 418.5,477.6 419.0,487.4 419.5,490.8 420.0,487.9 420.5,479.4 421.0,465.7 421.5,447.3 422.0,424.8 422.5,399.1 423.0,371.2 423.5,342.2 424.0,313.3 424.5,285.4 425.0,259.7 425.5,237.2 426.0,218.8 426.5,205.1 427.0,196.6 427.5,193.8 428.0,196.8 428.5,205.8 429.0,220.5 429.5,240.2 430.0,264.2 430.5,291.6 431.0,321.3 431.5,352.2 432.0,383.2 432.5,412.9 433.0,440.3 433.5,464.3 434.0,484.0 434.5,498.7 435.0,507.7 435.5,510.8 436.0,506.8 436.5,495.2 437.0,476.3 437.5,451.1 438.0,420.6 438.5,386.1 439.0,349.2 439.5,311.5 440.0,274.6 440.5,240.2 441.0,209.7 441.5,184.4 442.0,165.6 442.5,153.9 443.0,150.0 443.5,153.3 444.0,163.0 444.5,178.8 445.0,200.2 445.5,226.5 446.0,256.7 446.5,289.8 447.0,324.7 447.5,360.3 448.0,395.2 448.5,428.3 449.0,458.5 449.5,484.8 450.0,506.2 450.5,522.0 451.0,531.7 451.5,535.0 452.0,531.2 452.5,519.8 453.0,501.4 453.5,476.6 454.0,446.4 454.5,411.9 455.0,374.5 455.5,335.6 456.0,296.7 456.5,259.3 457.0,224.9 457.5,194.6 458.0,169.9 458.5,151.4 459.0,140.1 459.5,136.2 460.0,139.8 460.5,150.4 461.0,167.5 461.5,190.5 462.0,218.6 462.5,250.7 463.0,285.5 463.5,321.6 464.0,357.8 464.5,392.6 465.0,424.6 465.5,452.7 466.0,475.8 466.5,492.9 467.0,503.4 467.5,507.0 468.0,504.0 468.5,494.9 469.0,480.2 469.6,460.2 470.1,435.8 470.6,407.7 471.1,376.9 471.6,344.4 472.1,311.3 472.6,278.9 473.2,248.0 473.7,219.9 474.2,195.5 474.7,175.6 475.2,160.8 475.7,151.8 476.2,148.8 476.8,152.7 477.3,164.5 477.8,183.5 478.3,209.0 478.8,239.8 479.4,274.6 479.9,311.8 480.4,349.9 480.9,387.2 481.4,421.9 481.9,452.7 482.4,478.2 483.0,497.3 483.5,509.0 484.0,513.0 484.5,509.6 485.0,499.6 485.5,483.3 486.0,461.2 486.5,434.2 487.0,403.0 487.5,368.9 488.0,332.9 488.5,296.3 489.0,260.3 489.5,226.2 490.0,195.1 490.5,168.0 491.0,146.0 491.5,129.6 492.0,119.6 492.5,116.2 493.0,120.4 493.5,132.5 494.1,152.1 494.6,178.4 495.1,210.2 495.6,246.1 496.1,284.5 496.6,323.8 497.1,362.2 497.7,398.1 498.2,429.8 498.7,456.1 499.2,475.8 499.7,487.9 500.2,492.0 500.8,487.9 501.2,475.8 501.8,456.2 502.2,430.0 502.8,398.4 503.2,362.6 503.8,324.3 504.2,285.2 504.8,246.9 505.2,211.1 505.8,179.5 506.2,153.3 506.8,133.7 507.2,121.6 507.8,117.5 508.2,120.4 508.8,128.9 509.2,142.9 509.8,161.8 510.2,185.2 510.8,212.2 511.2,242.2 511.8,274.1 512.2,307.0 512.8,339.9 513.2,371.8 513.8,401.7 514.2,428.8 514.8,452.2 515.2,471.1 515.8,485.1 516.2,493.6 516.8,496.5 517.3,492.4 517.8,480.1 518.3,460.3 518.8,433.8 519.3,401.8 519.9,365.6 520.4,326.8 520.9,287.2 521.4,248.4 521.9,212.3 522.4,180.2 523.0,153.7 523.5,133.9 524.0,121.6 524.5,117.5 525.0,120.5 525.5,129.4 526.0,143.9 526.6,163.5 527.1,187.5 527.6,215.2 528.1,245.5 528.6,277.5 529.1,310.0 529.6,342.0 530.2,372.3 530.7,400.0 531.2,424.0 531.7,443.6 532.2,458.1 532.7,467.0 533.2,470.0 533.8,466.8 534.2,457.1 534.8,441.5 535.2,420.5 535.8,394.9 536.2,365.7 536.8,334.0 537.2,301.0 537.8,268.0 538.2,236.3 538.8,207.1 539.2,181.5 539.8,160.5 540.2,144.9 540.8,135.2 541.2,132.0 541.8,134.9 542.2,143.7 542.8,157.9 543.2,177.2 543.8,200.7 544.2,227.9 544.8,257.7 545.2,289.0 545.8,321.0 546.2,352.3 546.8,382.1 547.2,409.3 547.8,432.8 548.2,452.1 548.8,466.3 549.2,475.1 549.8,478.0 550.3,474.5 550.8,464.1 551.3,447.4 551.8,425.0 552.3,397.9 552.9,367.3 553.4,334.5 553.9,301.0 554.4,268.2 554.9,237.6 555.4,210.5 556.0,188.1 556.5,171.4 557.0,161.0 557.5,157.5 558.0,160.8 558.5,170.4 559.0,186.1 559.5,207.1 560.0,232.8 560.5,262.1 561.0,293.9 561.5,327.0 562.0,360.1 562.5,391.9 563.0,421.2 563.5,446.9 564.0,467.9 564.5,483.6 565.0,493.2 565.5,496.5 566.0,493.6 566.5,484.8 567.0,470.6 567.6,451.4 568.1,427.9 568.6,400.8 569.1,371.1 569.6,339.8 570.1,307.9 570.6,276.6 571.2,246.9 571.7,219.8 572.2,196.3 572.7,177.1 573.2,162.9 573.7,154.2 574.2,151.2 574.8,155.0 575.3,166.0 575.8,183.9 576.3,207.8 576.8,236.7 577.4,269.3 577.9,304.3 578.4,340.0 578.9,374.9 579.4,407.6 579.9,436.5 580.5,460.4 581.0,478.2 581.5,489.3 582.0,493.0 582.5,490.2 583.0,482.1 583.5,468.7 584.1,450.7 584.6,428.6 585.1,403.1 585.6,375.2 586.1,345.8 586.6,315.9 587.1,286.5 587.7,258.6 588.2,233.2 588.7,211.1 589.2,193.0 589.7,179.7 590.2,171.5 590.8,168.8 591.3,172.2 591.8,182.4 592.3,198.8 592.8,220.9 593.3,247.5 593.9,277.6 594.4,309.8 594.9,342.7 595.4,374.9 595.9,405.0 596.4,431.6 597.0,453.7 597.5,470.1 598.0,480.3 598.5,483.8 599.0,480.8 599.5,471.9 600.0,457.6 600.6,438.3 601.1,414.8 601.6,387.9 602.1,358.8 602.6,328.5 603.1,298.2 603.7,269.1 604.2,242.2 604.7,218.7 605.2,199.4 605.7,185.1 606.2,176.2 606.8,173.2 607.3,176.1 607.8,184.7 608.3,198.6 608.8,217.3 609.3,240.0 609.8,266.0 610.4,294.2 610.9,323.5 611.4,352.8 611.9,381.0 612.4,407.0 612.9,429.7 613.5,448.4 614.0,462.3 614.5,470.9 615.0,473.8 615.5,470.5 616.0,460.8 616.5,445.1 617.1,424.0 617.6,398.6 618.1,369.9 618.6,339.2 619.1,307.8 619.6,277.1 620.2,248.4 620.7,223.0 621.2,201.9 621.7,186.2 622.2,176.5 622.8,173.2 623.2,176.2 623.8,185.0 624.2,199.3 624.8,218.7 625.2,242.4 625.8,269.7 626.2,299.6 626.8,331.2 627.2,363.3 627.8,394.9 628.2,424.8 628.8,452.1 629.2,475.8 629.8,495.2 630.2,509.5 630.8,518.3 631.2,521.2 631.8,517.2 632.3,505.0 632.8,485.4 633.3,459.2 633.8,427.5 634.4,391.7 634.9,353.3 635.4,314.2 635.9,275.8 636.4,240.0 636.9,208.3 637.5,182.1 638.0,162.5 638.5,150.3 639.0,146.2 639.5,149.5 640.0,159.0 640.5,174.5 641.1,195.4 641.6,221.1 642.1,250.7 642.6,283.1 643.1,317.2 643.6,352.0 644.1,386.2 644.7,418.6 645.2,448.1 645.7,473.8 646.2,494.8 646.7,510.3 647.2,519.8 647.8,523.0 648.3,519.7 648.8,509.9 649.3,493.9 649.8,472.5 650.3,446.3 650.8,416.5 651.4,384.2 651.9,350.5 652.4,316.8 652.9,284.5 653.4,254.7 653.9,228.5 654.5,207.1 655.0,191.1 655.5,181.3 656.0,178.0 656.5,181.4 657.0,191.5 657.5,207.8 658.1,229.6 658.6,256.0 659.1,285.8 659.6,317.7 660.1,350.3 660.6,382.2 661.2,412.0 661.7,438.4 662.2,460.2 662.7,476.5 663.2,486.6 663.8,490.0 664.3,487.3 664.8,479.3 665.3,466.2 665.8,448.7 666.3,427.3 666.8,403.0 667.4,376.5 667.9,349.0 668.4,321.5 668.9,295.0 669.4,270.7 669.9,249.3 670.5,231.8 671.0,218.7 671.5,210.7 672.0,208.0 672.5,211.1 673.0,220.3 673.5,235.1 674.1,255.0 674.6,279.0 675.1,306.1 675.6,335.2 676.1,364.8 676.6,393.9 677.2,421.0 677.7,445.0 678.2,464.9 678.7,479.7 679.2,488.9 679.8,492.0 680.3,489.2 680.8,481.0 681.3,467.6 681.8,449.5 682.3,427.6 682.8,402.5 683.4,375.3 683.9,347.0 684.4,318.7 684.9,291.5 685.4,266.4 685.9,244.5 686.5,226.4 687.0,213.0 687.5,204.8 688.0,202.0 688.5,204.9 689.0,213.5 689.5,227.4 690.1,246.1 690.6,268.9 691.1,294.9 691.6,323.1 692.1,352.5 692.6,381.9 693.2,410.1 693.7,436.1 694.2,458.9 694.7,477.6 695.2,491.5 695.7,500.1 696.2,503.0 696.8,500.1 697.3,491.7 697.8,477.9 698.3,459.4 698.8,436.9 699.3,411.2 699.9,383.3 700.4,354.2 700.9,325.2 701.4,297.3 701.9,271.6 702.4,249.1 703.0,230.6 703.5,216.8 704.0,208.4 704.5,205.5 705.0,208.0 705.5,215.4 706.0,227.6 706.5,243.9 707.0,264.0 707.5,287.1 708.0,312.5 708.5,339.2 709.0,366.3 709.5,393.0 710.0,418.4 710.5,441.5 711.0,461.6 711.5,477.9 712.0,490.1 712.5,497.5 713.0,500.0 713.5,497.1 714.0,488.7 714.5,474.9 715.0,456.4 715.5,433.8 716.0,408.0 716.5,380.1 717.0,351.0 717.5,321.9 718.0,294.0 718.5,268.2 719.0,245.6 719.5,227.1 720.0,213.3 720.5,204.9 721.0,202.0 721.5,204.6 722.0,212.2 722.5,224.5 723.0,241.3 723.5,261.8 724.0,285.4 724.5,311.3 725.0,338.6 725.5,366.4 726.0,393.7 726.5,419.6 727.0,443.2 727.5,463.7 728.0,480.5 728.5,492.8 729.0,500.4 729.5,503.0 730.0,500.2 730.5,492.1 731.0,478.8 731.5,461.0 732.0,439.3 732.5,414.5 733.0,387.6 733.5,359.6 734.0,331.7 734.5,304.8 735.0,280.0 735.5,258.2 736.0,240.4 736.5,227.2 737.0,219.0 737.5,216.2 738.0,219.1 738.5,227.4 739.0,240.8 739.6,259.0 740.1,281.1 740.6,306.3 741.1,333.7 741.6,362.1 742.1,390.6 742.7,417.9 743.2,443.2 743.7,465.3 744.2,483.4 744.7,496.9 745.2,505.2 745.8,508.0 746.2,505.5 746.8,498.1 747.2,486.0 747.8,469.7 748.2,449.7 748.8,426.7 749.2,401.4 749.8,374.8 750.2,347.7 750.8,321.1 751.2,295.8 751.8,272.8 752.2,252.8 752.8,236.5 753.2,224.4 753.8,217.0 754.2,214.5 754.8,217.9 755.3,227.8 755.8,243.9 756.3,265.4 756.8,291.4 757.4,320.7 757.9,352.2 758.4,384.3 758.9,415.8 759.4,445.1 759.9,471.1 760.5,492.6 761.0,508.7 761.5,518.6 762.0,522.0 762.5,519.4 763.0,511.5 763.5,498.7 764.1,481.4 764.6,460.3 765.1,435.9 765.6,409.1 766.1,381.0 766.6,352.3 767.1,324.1 767.7,297.4 768.2,273.0 768.7,251.8 769.2,234.5 769.7,221.7 770.2,213.9 770.8,211.2 771.2,214.6 771.8,224.6 772.2,240.7 772.8,262.3 773.2,288.4 773.8,317.9 774.2,349.5 774.8,381.8 775.2,413.3 775.8,442.8 776.2,468.9 776.8,490.5 777.2,506.7 777.8,516.6 778.2,520.0 778.8,517.5 779.2,510.0 779.8,497.9 780.2,481.5 780.8,461.4 781.2,438.2 781.8,412.9 782.2,386.1 782.8,358.9 783.2,332.1 783.8,306.8 784.2,283.6 784.8,263.5 785.2,247.1 785.8,235.0 786.2,227.5 786.8,225.0 787.3,227.8 787.8,236.0 788.3,249.4 788.8,267.5 789.3,289.4 789.8,314.5 790.4,341.7 790.9,370.0 791.4,398.3 791.9,425.5 792.4,450.6 792.9,472.5 793.5,490.6 794.0,504.0 794.5,512.2 795.0,515.0 795.5,512.2 796.0,503.9 796.5,490.4 797.0,472.2 797.5,450.0 798.0,424.7 798.5,397.3 799.0,368.8 799.5,340.2 800.0,312.8 800.5,287.5 801.0,265.3 801.5,247.1 802.0,233.6 802.5,225.3 803.0,222.5 803.5,225.3 804.0,233.6 804.5,247.1 805.1,265.3 805.6,287.5 806.1,312.8 806.6,340.2 807.1,368.8 807.6,397.3 808.2,424.7 808.7,450.0 809.2,472.2 809.7,490.4 810.2,503.9 810.7,512.2 811.2,515.0 811.8,512.2 812.2,503.8 812.8,490.3 813.2,472.1 813.8,449.9 814.2,424.6 814.8,397.1 815.2,368.5 815.8,339.9 816.2,312.4 816.8,287.1 817.2,264.9 817.8,246.7 818.2,233.2 818.8,224.8 819.2,222.0 819.8,224.5 820.3,232.1 820.8,244.3 821.3,260.9 821.8,281.2 822.3,304.6 822.9,330.2 823.4,357.3 823.9,384.7 824.4,411.8 824.9,437.4 825.4,460.8 825.9,481.1 826.5,497.7 827.0,509.9 827.5,517.5 828.0,520.0 828.5,516.6 829.0,506.5 829.5,490.2 830.0,468.4 830.5,442.1 831.0,412.3 831.5,380.4 832.0,347.8 832.5,316.0 833.0,286.2 833.5,259.8 834.0,238.0 834.5,221.7 835.0,211.7 835.5,208.2 836.0,211.0 836.5,219.0 837.0,232.1 837.5,249.7 838.0,271.4 838.5,296.4 839.0,323.7 839.5,352.6 840.0,381.9 840.5,410.8 841.0,438.1 841.5,463.1 842.0,484.8 842.5,502.4 843.0,515.5 843.5,523.5 844.0,526.2 844.5,523.6 845.0,515.5 845.5,502.5 846.0,484.9 846.5,463.3 847.0,438.4 847.5,411.1 848.0,382.4 848.5,353.1 849.0,324.4 849.5,297.1 850.0,272.2 850.5,250.6 851.0,233.0 851.5,220.0 852.0,211.9 852.5,209.2 853.0,212.6 853.5,222.6 854.0,238.6 854.6,260.2 855.1,286.2 855.6,315.6 856.1,347.0 856.6,379.2 857.1,410.7 857.7,440.1 858.2,466.1 858.7,487.6 859.2,503.7 859.7,513.6 860.2,517.0 860.8,514.4 861.2,506.6 861.8,493.8 862.2,476.6 862.8,455.5 863.2,431.2 863.8,404.6 864.2,376.5 864.8,348.0 865.2,319.9 865.8,293.3 866.2,269.0 866.8,247.9 867.2,230.7 867.8,217.9 868.2,210.1 868.8,207.5 869.2,210.5 869.8,219.4 870.2,233.8 870.8,253.3 871.2,276.9 871.8,304.0 872.2,333.3 872.8,363.8 873.2,394.2 873.8,423.5 874.2,450.6 874.8,474.2 875.2,493.7 875.8,508.1 876.2,517.0 876.8,520.0 877.3,516.9 877.8,507.6 878.3,492.4 878.8,472.1 879.3,447.3 879.8,419.1 880.4,388.4 880.9,356.5 881.4,324.6 881.9,293.9 882.4,265.7 882.9,240.9 883.5,220.6 884.0,205.4 884.5,196.1 885.0,193.0 885.5,196.0 886.0,205.1 886.5,219.7 887.1,239.4 887.6,263.4 888.1,290.8 888.6,320.6 889.1,351.5 889.6,382.4 890.2,412.2 890.7,439.6 891.2,463.6 891.7,483.3 892.2,497.9 892.7,507.0 893.2,510.0 893.8,507.1 894.2,498.4 894.8,484.3 895.2,465.4 895.8,442.3 896.2,416.0 896.8,387.5 897.2,357.8 897.8,328.0 898.2,299.5 898.8,273.2 899.2,250.1 899.8,231.2 900.2,217.1 900.8,208.4 901.2,205.5 901.8,208.2 902.3,216.1 902.8,229.1 903.3,246.5 903.8,268.0 904.3,292.7 904.9,319.7 905.4,348.2 905.9,377.3 906.4,405.8 906.9,432.8 907.4,457.5 907.9,479.0 908.5,496.4 909.0,509.4 909.5,517.3 910.0,520.0 910.5,516.5 911.0,506.1 911.5,489.3 912.0,466.8 912.5,439.6 913.0,408.8 913.5,375.9 914.0,342.3 914.5,309.4 915.0,278.7 915.5,251.5 916.0,229.0 916.5,212.2 917.0,201.8 917.5,198.2 918.0,201.0 918.5,209.0 919.0,222.1 919.5,239.8 920.0,261.6 920.5,286.6 921.0,314.0 921.5,342.9 922.0,372.3 922.5,401.2 923.0,428.7 923.5,453.7 924.0,475.4 924.5,493.1 925.0,506.2 925.5,514.3 926.0,517.0 926.5,513.5 927.0,503.3 927.5,486.8 928.0,464.6 928.5,437.9 929.0,407.7 929.5,375.3 930.0,342.2 930.5,309.8 931.0,279.6 931.5,252.9 932.0,230.7 932.5,214.2 933.0,204.0 933.5,200.5 934.0,203.2 934.5,211.2 935.0,224.2 935.5,241.8 936.0,263.4 936.5,288.2 937.0,315.4 937.5,344.1 938.0,373.4 938.5,402.1 939.0,429.3 939.5,454.1 940.0,475.7 940.5,493.3 941.0,506.3 941.5,514.3 942.0,517.0 942.5,514.2 943.0,506.0 943.5,492.7 944.1,474.6 944.6,452.4 945.1,426.9 945.6,399.0 946.1,369.5 946.6,339.5 947.1,310.0 947.7,282.1 948.2,256.6 948.7,234.4 949.2,216.3 949.7,203.0 950.2,194.8 950.8,192.0 951.3,195.5 951.8,205.8 952.3,222.5 952.8,244.8 953.3,271.8 953.9,302.3 954.4,334.9 954.9,368.3 955.4,401.0 955.9,431.4 956.4,458.4 957.0,480.8 957.5,497.4 958.0,507.8 958.5,511.2 959.0,508.6 959.5,500.5 960.0,487.5 960.5,469.9 961.0,448.3 961.5,423.4 962.0,396.1 962.5,367.4 963.0,338.1 963.5,309.4 964.0,282.1 964.5,257.2 965.0,235.6 965.5,218.0 966.0,205.0 966.5,196.9 967.0,194.2 967.5,197.7 968.0,207.9 968.5,224.4 969.1,246.5 969.6,273.2 970.1,303.3 970.6,335.6 971.1,368.6 971.6,400.9 972.2,431.1 972.7,457.8 973.2,479.8 973.7,496.4 974.2,506.6 974.8,510.0 975.3,507.0 975.8,498.1 976.3,483.7 976.8,464.3 977.3,440.7 977.8,413.8 978.4,384.5 978.9,354.1 979.4,323.7 979.9,294.5 980.4,267.5 980.9,243.9 981.5,224.5 982.0,210.1 982.5,201.2 983.0,198.2 983.5,201.1 984.0,209.5 984.5,223.1 985.1,241.5 985.6,263.8 986.1,289.3 986.6,317.0 987.1,345.8 987.6,374.5 988.2,402.2 988.7,427.7 989.2,450.0 989.7,468.4 990.2,482.0 990.7,490.4 991.2,493.2 991.8,490.4 992.3,481.8 992.8,467.9 993.3,449.3 993.8,426.5 994.3,400.6 994.9,372.4 995.4,343.1 995.9,313.8 996.4,285.7 996.9,259.7 997.4,237.0 998.0,218.3 998.5,204.4 999.0,195.9 999.5,193.0 1000.0,195.6 1000.5,203.2 1001.0,215.6 1001.5,232.3 1002.0,252.9 1002.5,276.5 1003.0,302.4 1003.5,329.7 1004.0,357.5 1004.5,384.8 1005.0,410.8 1005.5,434.4 1006.0,454.9 1006.5,471.7 1007.0,484.1 1007.5,491.7 1008.0,494.2 1008.6,488.0 1009.2,470.0 1009.8,440.0 1010.3,405.0 1010.6,380.0" fill="none" stroke="#c6c6ff" stroke-opacity="0.7" stroke-width="3" stroke-linejoin="round"/>
<polyline points="63.6,391.5 64.3,390.5 67.5,392.6 70.0,390.6 72.9,388.3 74.5,389.0 76.0,386.8 78.8,385.1 81.0,385.8 83.0,384.0 85.8,383.5 89.0,380.8 91.0,382.0 93.3,381.4 96.5,378.7 100.0,378.0 105.1,377.0 107.3,372.8 111.6,372.2 113.2,369.5 115.9,371.7 118.5,368.5 123.9,366.3 125.5,363.1 128.7,362.0 131.0,362.8 134.1,364.2 138.4,361.0 143.8,357.2 148.1,357.7 151.8,356.1 153.2,352.0 153.7,347.7 154.2,335.9 154.7,319.8 155.2,303.6 155.7,291.8 156.2,287.5 156.8,293.1 157.3,308.9 157.8,332.6 158.4,360.6 158.9,388.6 159.4,412.3 160.0,428.2 160.5,433.8 161.0,428.3 161.5,412.5 162.1,387.2 162.6,354.3 163.1,316.0 163.6,274.9 164.1,233.8 164.7,195.4 165.2,162.5 165.7,137.3 166.2,121.4 166.8,116.0 167.2,117.9 167.8,123.4 168.2,132.6 168.8,145.2 169.2,161.0 169.8,179.6 170.2,200.9 170.8,224.3 171.2,249.4 171.8,275.7 172.2,302.8 172.8,330.2 173.2,357.3 173.8,383.6 174.2,408.7 174.8,432.1 175.2,453.4 175.8,472.0 176.2,487.8 176.8,500.4 177.2,509.6 177.8,515.1 178.2,517.0 178.8,515.0 179.3,509.2 179.8,499.6 180.3,486.6 180.8,470.5 181.3,451.8 181.8,430.8 182.4,408.3 182.9,384.9 183.4,361.1 183.9,337.7 184.4,315.2 184.9,294.2 185.4,275.5 185.9,259.4 186.5,246.4 187.0,236.8 187.5,231.0 188.0,229.0 188.5,229.8 189.0,232.0 189.5,235.7 190.0,240.5 190.5,246.3 191.0,252.7 191.5,259.5 192.0,266.3 192.5,272.7 193.0,278.5 193.5,283.3 194.0,287.0 194.5,289.2 195.0,290.0 195.5,289.7 196.1,288.8 196.6,287.5 197.2,286.2 197.7,285.3 198.2,285.0 198.8,286.1 199.3,289.4 199.8,294.8 200.3,302.2 200.8,311.4 201.3,322.3 201.8,334.7 202.3,348.2 202.9,362.7 203.4,377.7 203.9,393.1 204.4,408.5 204.9,423.6 205.4,438.0 205.9,451.6 206.4,463.9 206.9,474.8 207.5,484.1 208.0,491.5 208.5,496.9 209.0,500.1 209.5,501.2 210.0,500.9 210.5,499.9 211.0,498.3 211.5,496.0 212.0,493.1 212.5,489.6 213.1,485.6 213.6,481.0 214.1,475.9 214.6,470.4 215.1,464.5 215.6,458.2 216.1,451.7 216.6,444.9 217.1,437.9 217.6,430.8 218.1,423.6 218.6,416.5 219.1,409.4 219.6,402.4 220.2,395.6 220.7,389.0 221.2,382.8 221.7,376.8 222.2,371.3 222.7,366.3 223.2,361.7 223.7,357.6 224.2,354.1 224.7,351.2 225.2,349.0 225.7,347.3 226.2,346.3 226.8,346.0 227.3,346.8 227.8,348.9 228.4,351.8 228.9,354.6 229.5,356.7 230.0,357.5 230.5,356.9 231.0,355.0 231.5,351.9 232.0,347.9 232.5,343.1 233.0,337.9 233.5,332.6 234.0,327.4 234.5,322.6 235.0,318.6 235.5,315.5 236.0,313.6 236.5,313.0 237.0,315.0 237.5,320.8 238.1,330.1 238.6,342.6 239.1,357.4 239.6,374.0 240.1,391.5 240.6,409.0 241.2,425.6 241.7,440.4 242.2,452.9 242.7,462.2 243.2,468.0 243.8,470.0 244.3,468.3 244.8,463.2 245.3,455.0 245.8,443.9 246.3,430.6 246.8,415.6 247.4,399.5 247.9,383.0 248.4,366.9 248.9,351.9 249.4,338.6 249.9,327.5 250.5,319.3 251.0,314.2 251.5,312.5 252.0,313.8 252.5,317.6 253.0,323.7 253.5,331.6 254.0,340.8 254.5,350.6 255.0,360.5 255.5,369.7 256.0,377.6 256.5,383.6 257.0,387.5 257.5,388.8 258.0,387.8 258.5,385.2 259.0,380.9 259.5,375.0 260.0,367.9 260.5,359.8 261.0,351.0 261.5,341.9 262.0,332.7 262.5,323.9 263.0,315.8 263.5,308.7 264.0,302.9 264.5,298.6 265.0,295.9 265.5,295.0 266.0,296.1 266.5,299.2 267.0,304.3 267.5,311.3 268.0,320.0 268.5,330.1 269.0,341.4 269.5,353.5 270.0,366.1 270.5,378.9 271.0,391.5 271.5,403.6 272.0,414.9 272.5,425.0 273.0,433.7 273.5,440.7 274.0,445.8 274.5,448.9 275.0,450.0 275.5,448.7 276.0,444.7 276.5,438.2 277.1,429.4 277.6,418.7 278.1,406.4 278.6,392.8 279.1,378.5 279.6,364.0 280.1,349.7 280.7,336.1 281.2,323.8 281.7,313.1 282.2,304.3 282.7,297.8 283.2,293.8 283.8,292.5 284.3,293.8 284.8,297.6 285.3,303.8 285.8,312.0 286.3,321.8 286.9,332.7 287.4,344.2 287.9,355.8 288.4,366.7 288.9,376.5 289.4,384.7 290.0,390.9 290.5,394.7 291.0,396.0 291.5,394.2 292.0,388.7 292.5,380.0 293.0,368.5 293.5,354.9 294.0,340.0 294.5,324.7 295.0,309.8 295.5,296.2 296.0,284.8 296.5,276.0 297.0,270.6 297.5,268.8 298.0,269.9 298.5,273.2 299.0,278.7 299.5,286.2 300.0,295.6 300.5,306.5 301.0,318.8 301.5,332.1 302.0,346.0 302.5,360.4 303.0,374.7 303.5,388.7 304.0,402.0 304.5,414.2 305.0,425.2 305.5,434.5 306.0,442.0 306.5,447.5 307.0,450.9 307.5,452.0 308.0,450.5 308.5,446.1 309.0,438.9 309.5,429.3 310.0,417.8 310.5,404.7 311.0,390.7 311.5,376.3 312.0,362.3 312.5,349.2 313.0,337.7 313.5,328.1 314.0,320.9 314.5,316.5 315.0,315.0 315.5,316.4 316.0,320.7 316.5,327.4 317.0,336.2 317.5,346.5 318.0,357.5 318.5,368.5 319.0,378.8 319.5,387.6 320.0,394.3 320.5,398.6 321.0,400.0 321.5,398.7 322.0,394.8 322.5,388.6 323.0,380.2 323.5,369.9 324.0,358.2 324.5,345.5 325.0,332.2 325.5,319.0 326.0,306.3 326.5,294.6 327.0,284.3 327.5,275.9 328.0,269.7 328.5,265.8 329.0,264.5 329.5,267.0 330.0,274.6 330.5,286.9 331.1,303.6 331.6,324.2 332.1,348.1 332.6,374.5 333.1,402.6 333.6,431.6 334.1,460.6 334.7,488.8 335.2,515.2 335.7,539.1 336.2,559.7 336.7,576.4 337.2,588.7 337.7,596.2 338.2,598.8 338.8,594.1 339.2,580.4 339.8,558.1 340.2,528.1 340.8,491.5 341.2,449.8 341.8,404.6 342.2,357.5 342.8,310.4 343.2,265.2 343.8,223.5 344.2,186.9 344.8,156.9 345.2,134.6 345.8,120.9 346.2,116.2 346.8,119.6 347.2,129.4 347.8,145.5 348.2,167.3 348.8,194.2 349.2,225.3 349.8,259.8 350.2,296.5 350.8,334.4 351.2,372.3 351.8,409.0 352.2,443.4 352.8,474.6 353.2,501.5 353.8,523.3 354.2,539.3 354.8,549.2 355.2,552.5 355.8,548.7 356.2,537.6 356.8,519.7 357.2,495.6 357.8,466.6 358.2,433.7 358.8,398.6 359.2,362.7 359.8,327.5 360.2,294.7 360.8,265.6 361.2,241.6 361.8,223.6 362.2,212.5 362.8,208.8 363.3,211.4 363.8,219.1 364.3,231.8 364.8,248.8 365.3,269.5 365.8,293.1 366.4,318.7 366.9,345.4 367.4,372.0 367.9,397.7 368.4,421.3 368.9,442.0 369.5,459.0 370.0,471.6 370.5,479.4 371.0,482.0 371.5,479.5 372.0,472.1 372.5,460.2 373.0,444.2 373.5,424.9 374.0,403.1 374.5,379.8 375.0,355.9 375.5,332.6 376.0,310.8 376.5,291.5 377.0,275.5 377.5,263.6 378.0,256.2 378.5,253.8 379.0,255.3 379.5,260.0 380.0,267.6 380.5,277.8 381.0,290.2 381.5,304.4 382.0,319.9 382.5,335.9 383.0,351.9 383.5,367.3 384.0,381.5 384.5,393.9 385.0,404.2 385.5,411.7 386.0,416.4 386.5,418.0 387.0,416.2 387.5,410.8 388.0,402.1 388.5,390.4 389.0,376.1 389.5,359.8 390.0,342.1 390.5,323.8 391.0,305.4 391.5,287.7 392.0,271.4 392.5,257.1 393.0,245.4 393.5,236.7 394.0,231.3 394.5,229.5 395.0,231.8 395.5,238.7 396.0,249.9 396.6,265.0 397.1,283.4 397.6,304.3 398.1,327.1 398.6,350.8 399.1,374.4 399.7,397.2 400.2,418.1 400.7,436.5 401.2,451.6 401.7,462.8 402.2,469.7 402.8,472.0 403.3,469.8 403.8,463.4 404.3,452.9 404.8,438.7 405.3,421.2 405.8,400.9 406.3,378.4 406.9,354.5 407.4,329.8 407.9,305.0 408.4,281.1 408.9,258.6 409.4,238.3 409.9,220.8 410.5,206.6 411.0,196.1 411.5,189.7 412.0,187.5 412.5,190.8 413.0,200.6 413.5,216.5 414.0,237.7 414.5,263.3 415.0,292.3 415.5,323.3 416.0,355.0 416.5,386.0 417.0,414.9 417.5,440.6 418.0,461.8 418.5,477.6 419.0,487.4 419.5,490.8 420.0,487.9 420.5,479.4 421.0,465.7 421.5,447.3 422.0,424.8 422.5,399.1 423.0,371.2 423.5,342.2 424.0,313.3 424.5,285.4 425.0,259.7 425.5,237.2 426.0,218.8 426.5,205.1 427.0,196.6 427.5,193.8 428.0,196.8 428.5,205.8 429.0,220.5 429.5,240.2 430.0,264.2 430.5,291.6 431.0,321.3 431.5,352.2 432.0,383.2 432.5,412.9 433.0,440.3 433.5,464.3 434.0,484.0 434.5,498.7 435.0,507.7 435.5,510.8 436.0,506.8 436.5,495.2 437.0,476.3 437.5,451.1 438.0,420.6 438.5,386.1 439.0,349.2 439.5,311.5 440.0,274.6 440.5,240.2 441.0,209.7 441.5,184.4 442.0,165.6 442.5,153.9 443.0,150.0 443.5,153.3 444.0,163.0 444.5,178.8 445.0,200.2 445.5,226.5 446.0,256.7 446.5,289.8 447.0,324.7 447.5,360.3 448.0,395.2 448.5,428.3 449.0,458.5 449.5,484.8 450.0,506.2 450.5,522.0 451.0,531.7 451.5,535.0 452.0,531.2 452.5,519.8 453.0,501.4 453.5,476.6 454.0,446.4 454.5,411.9 455.0,374.5 455.5,335.6 456.0,296.7 456.5,259.3 457.0,224.9 457.5,194.6 458.0,169.9 458.5,151.4 459.0,140.1 459.5,136.2 460.0,139.8 460.5,150.4 461.0,167.5 461.5,190.5 462.0,218.6 462.5,250.7 463.0,285.5 463.5,321.6 464.0,357.8 464.5,392.6 465.0,424.6 465.5,452.7 466.0,475.8 466.5,492.9 467.0,503.4 467.5,507.0 468.0,504.0 468.5,494.9 469.0,480.2 469.6,460.2 470.1,435.8 470.6,407.7 471.1,376.9 471.6,344.4 472.1,311.3 472.6,278.9 473.2,248.0 473.7,219.9 474.2,195.5 474.7,175.6 475.2,160.8 475.7,151.8 476.2,148.8 476.8,152.7 477.3,164.5 477.8,183.5 478.3,209.0 478.8,239.8 479.4,274.6 479.9,311.8 480.4,349.9 480.9,387.2 481.4,421.9 481.9,452.7 482.4,478.2 483.0,497.3 483.5,509.0 484.0,513.0 484.5,509.6 485.0,499.6 485.5,483.3 486.0,461.2 486.5,434.2 487.0,403.0 487.5,368.9 488.0,332.9 488.5,296.3 489.0,260.3 489.5,226.2 490.0,195.1 490.5,168.0 491.0,146.0 491.5,129.6 492.0,119.6 492.5,116.2 493.0,120.4 493.5,132.5 494.1,152.1 494.6,178.4 495.1,210.2 495.6,246.1 496.1,284.5 496.6,323.8 497.1,362.2 497.7,398.1 498.2,429.8 498.7,456.1 499.2,475.8 499.7,487.9 500.2,492.0 500.8,487.9 501.2,475.8 501.8,456.2 502.2,430.0 502.8,398.4 503.2,362.6 503.8,324.3 504.2,285.2 504.8,246.9 505.2,211.1 505.8,179.5 506.2,153.3 506.8,133.7 507.2,121.6 507.8,117.5 508.2,120.4 508.8,128.9 509.2,142.9 509.8,161.8 510.2,185.2 510.8,212.2 511.2,242.2 511.8,274.1 512.2,307.0 512.8,339.9 513.2,371.8 513.8,401.7 514.2,428.8 514.8,452.2 515.2,471.1 515.8,485.1 516.2,493.6 516.8,496.5 517.3,492.4 517.8,480.1 518.3,460.3 518.8,433.8 519.3,401.8 519.9,365.6 520.4,326.8 520.9,287.2 521.4,248.4 521.9,212.3 522.4,180.2 523.0,153.7 523.5,133.9 524.0,121.6 524.5,117.5 525.0,120.5 525.5,129.4 526.0,143.9 526.6,163.5 527.1,187.5 527.6,215.2 528.1,245.5 528.6,277.5 529.1,310.0 529.6,342.0 530.2,372.3 530.7,400.0 531.2,424.0 531.7,443.6 532.2,458.1 532.7,467.0 533.2,470.0 533.8,466.8 534.2,457.1 534.8,441.5 535.2,420.5 535.8,394.9 536.2,365.7 536.8,334.0 537.2,301.0 537.8,268.0 538.2,236.3 538.8,207.1 539.2,181.5 539.8,160.5 540.2,144.9 540.8,135.2 541.2,132.0 541.8,134.9 542.2,143.7 542.8,157.9 543.2,177.2 543.8,200.7 544.2,227.9 544.8,257.7 545.2,289.0 545.8,321.0 546.2,352.3 546.8,382.1 547.2,409.3 547.8,432.8 548.2,452.1 548.8,466.3 549.2,475.1 549.8,478.0 550.3,474.5 550.8,464.1 551.3,447.4 551.8,425.0 552.3,397.9 552.9,367.3 553.4,334.5 553.9,301.0 554.4,268.2 554.9,237.6 555.4,210.5 556.0,188.1 556.5,171.4 557.0,161.0 557.5,157.5 558.0,160.8 558.5,170.4 559.0,186.1 559.5,207.1 560.0,232.8 560.5,262.1 561.0,293.9 561.5,327.0 562.0,360.1 562.5,391.9 563.0,421.2 563.5,446.9 564.0,467.9 564.5,483.6 565.0,493.2 565.5,496.5 566.0,493.6 566.5,484.8 567.0,470.6 567.6,451.4 568.1,427.9 568.6,400.8 569.1,371.1 569.6,339.8 570.1,307.9 570.6,276.6 571.2,246.9 571.7,219.8 572.2,196.3 572.7,177.1 573.2,162.9 573.7,154.2 574.2,151.2 574.8,155.0 575.3,166.0 575.8,183.9 576.3,207.8 576.8,236.7 577.4,269.3 577.9,304.3 578.4,340.0 578.9,374.9 579.4,407.6 579.9,436.5 580.5,460.4 581.0,478.2 581.5,489.3 582.0,493.0 582.5,490.2 583.0,482.1 583.5,468.7 584.1,450.7 584.6,428.6 585.1,403.1 585.6,375.2 586.1,345.8 586.6,315.9 587.1,286.5 587.7,258.6 588.2,233.2 588.7,211.1 589.2,193.0 589.7,179.7 590.2,171.5 590.8,168.8 591.3,172.2 591.8,182.4 592.3,198.8 592.8,220.9 593.3,247.5 593.9,277.6 594.4,309.8 594.9,342.7 595.4,374.9 595.9,405.0 596.4,431.6 597.0,453.7 597.5,470.1 598.0,480.3 598.5,483.8 599.0,480.8 599.5,471.9 600.0,457.6 600.6,438.3 601.1,414.8 601.6,387.9 602.1,358.8 602.6,328.5 603.1,298.2 603.7,269.1 604.2,242.2 604.7,218.7 605.2,199.4 605.7,185.1 606.2,176.2 606.8,173.2 607.3,176.1 607.8,184.7 608.3,198.6 608.8,217.3 609.3,240.0 609.8,266.0 610.4,294.2 610.9,323.5 611.4,352.8 611.9,381.0 612.4,407.0 612.9,429.7 613.5,448.4 614.0,462.3 614.5,470.9 615.0,473.8 615.5,470.5 616.0,460.8 616.5,445.1 617.1,424.0 617.6,398.6 618.1,369.9 618.6,339.2 619.1,307.8 619.6,277.1 620.2,248.4 620.7,223.0 621.2,201.9 621.7,186.2 622.2,176.5 622.8,173.2 623.2,176.2 623.8,185.0 624.2,199.3 624.8,218.7 625.2,242.4 625.8,269.7 626.2,299.6 626.8,331.2 627.2,363.3 627.8,394.9 628.2,424.8 628.8,452.1 629.2,475.8 629.8,495.2 630.2,509.5 630.8,518.3 631.2,521.2 631.8,517.2 632.3,505.0 632.8,485.4 633.3,459.2 633.8,427.5 634.4,391.7 634.9,353.3 635.4,314.2 635.9,275.8 636.4,240.0 636.9,208.3 637.5,182.1 638.0,162.5 638.5,150.3 639.0,146.2 639.5,149.5 640.0,159.0 640.5,174.5 641.1,195.4 641.6,221.1 642.1,250.7 642.6,283.1 643.1,317.2 643.6,352.0 644.1,386.2 644.7,418.6 645.2,448.1 645.7,473.8 646.2,494.8 646.7,510.3 647.2,519.8 647.8,523.0 648.3,519.7 648.8,509.9 649.3,493.9 649.8,472.5 650.3,446.3 650.8,416.5 651.4,384.2 651.9,350.5 652.4,316.8 652.9,284.5 653.4,254.7 653.9,228.5 654.5,207.1 655.0,191.1 655.5,181.3 656.0,178.0 656.5,181.4 657.0,191.5 657.5,207.8 658.1,229.6 658.6,256.0 659.1,285.8 659.6,317.7 660.1,350.3 660.6,382.2 661.2,412.0 661.7,438.4 662.2,460.2 662.7,476.5 663.2,486.6 663.8,490.0 664.3,487.3 664.8,479.3 665.3,466.2 665.8,448.7 666.3,427.3 666.8,403.0 667.4,376.5 667.9,349.0 668.4,321.5 668.9,295.0 669.4,270.7 669.9,249.3 670.5,231.8 671.0,218.7 671.5,210.7 672.0,208.0 672.5,211.1 673.0,220.3 673.5,235.1 674.1,255.0 674.6,279.0 675.1,306.1 675.6,335.2 676.1,364.8 676.6,393.9 677.2,421.0 677.7,445.0 678.2,464.9 678.7,479.7 679.2,488.9 679.8,492.0 680.3,489.2 680.8,481.0 681.3,467.6 681.8,449.5 682.3,427.6 682.8,402.5 683.4,375.3 683.9,347.0 684.4,318.7 684.9,291.5 685.4,266.4 685.9,244.5 686.5,226.4 687.0,213.0 687.5,204.8 688.0,202.0 688.5,204.9 689.0,213.5 689.5,227.4 690.1,246.1 690.6,268.9 691.1,294.9 691.6,323.1 692.1,352.5 692.6,381.9 693.2,410.1 693.7,436.1 694.2,458.9 694.7,477.6 695.2,491.5 695.7,500.1 696.2,503.0 696.8,500.1 697.3,491.7 697.8,477.9 698.3,459.4 698.8,436.9 699.3,411.2 699.9,383.3 700.4,354.2 700.9,325.2 701.4,297.3 701.9,271.6 702.4,249.1 703.0,230.6 703.5,216.8 704.0,208.4 704.5,205.5 705.0,208.0 705.5,215.4 706.0,227.6 706.5,243.9 707.0,264.0 707.5,287.1 708.0,312.5 708.5,339.2 709.0,366.3 709.5,393.0 710.0,418.4 710.5,441.5 711.0,461.6 711.5,477.9 712.0,490.1 712.5,497.5 713.0,500.0 713.5,497.1 714.0,488.7 714.5,474.9 715.0,456.4 715.5,433.8 716.0,408.0 716.5,380.1 717.0,351.0 717.5,321.9 718.0,294.0 718.5,268.2 719.0,245.6 719.5,227.1 720.0,213.3 720.5,204.9 721.0,202.0 721.5,204.6 722.0,212.2 722.5,224.5 723.0,241.3 723.5,261.8 724.0,285.4 724.5,311.3 725.0,338.6 725.5,366.4 726.0,393.7 726.5,419.6 727.0,443.2 727.5,463.7 728.0,480.5 728.5,492.8 729.0,500.4 729.5,503.0 730.0,500.2 730.5,492.1 731.0,478.8 731.5,461.0 732.0,439.3 732.5,414.5 733.0,387.6 733.5,359.6 734.0,331.7 734.5,304.8 735.0,280.0 735.5,258.2 736.0,240.4 736.5,227.2 737.0,219.0 737.5,216.2 738.0,219.1 738.5,227.4 739.0,240.8 739.6,259.0 740.1,281.1 740.6,306.3 741.1,333.7 741.6,362.1 742.1,390.6 742.7,417.9 743.2,443.2 743.7,465.3 744.2,483.4 744.7,496.9 745.2,505.2 745.8,508.0 746.2,505.5 746.8,498.1 747.2,486.0 747.8,469.7 748.2,449.7 748.8,426.7 749.2,401.4 749.8,374.8 750.2,347.7 750.8,321.1 751.2,295.8 751.8,272.8 752.2,252.8 752.8,236.5 753.2,224.4 753.8,217.0 754.2,214.5 754.8,217.9 755.3,227.8 755.8,243.9 756.3,265.4 756.8,291.4 757.4,320.7 757.9,352.2 758.4,384.3 758.9,415.8 759.4,445.1 759.9,471.1 760.5,492.6 761.0,508.7 761.5,518.6 762.0,522.0 762.5,519.4 763.0,511.5 763.5,498.7 764.1,481.4 764.6,460.3 765.1,435.9 765.6,409.1 766.1,381.0 766.6,352.3 767.1,324.1 767.7,297.4 768.2,273.0 768.7,251.8 769.2,234.5 769.7,221.7 770.2,213.9 770.8,211.2 771.2,214.6 771.8,224.6 772.2,240.7 772.8,262.3 773.2,288.4 773.8,317.9 774.2,349.5 774.8,381.8 775.2,413.3 775.8,442.8 776.2,468.9 776.8,490.5 777.2,506.7 777.8,516.6 778.2,520.0 778.8,517.5 779.2,510.0 779.8,497.9 780.2,481.5 780.8,461.4 781.2,438.2 781.8,412.9 782.2,386.1 782.8,358.9 783.2,332.1 783.8,306.8 784.2,283.6 784.8,263.5 785.2,247.1 785.8,235.0 786.2,227.5 786.8,225.0 787.3,227.8 787.8,236.0 788.3,249.4 788.8,267.5 789.3,289.4 789.8,314.5 790.4,341.7 790.9,370.0 791.4,398.3 791.9,425.5 792.4,450.6 792.9,472.5 793.5,490.6 794.0,504.0 794.5,512.2 795.0,515.0 795.5,512.2 796.0,503.9 796.5,490.4 797.0,472.2 797.5,450.0 798.0,424.7 798.5,397.3 799.0,368.8 799.5,340.2 800.0,312.8 800.5,287.5 801.0,265.3 801.5,247.1 802.0,233.6 802.5,225.3 803.0,222.5 803.5,225.3 804.0,233.6 804.5,247.1 805.1,265.3 805.6,287.5 806.1,312.8 806.6,340.2 807.1,368.8 807.6,397.3 808.2,424.7 808.7,450.0 809.2,472.2 809.7,490.4 810.2,503.9 810.7,512.2 811.2,515.0 811.8,512.2 812.2,503.8 812.8,490.3 813.2,472.1 813.8,449.9 814.2,424.6 814.8,397.1 815.2,368.5 815.8,339.9 816.2,312.4 816.8,287.1 817.2,264.9 817.8,246.7 818.2,233.2 818.8,224.8 819.2,222.0 819.8,224.5 820.3,232.1 820.8,244.3 821.3,260.9 821.8,281.2 822.3,304.6 822.9,330.2 823.4,357.3 823.9,384.7 824.4,411.8 824.9,437.4 825.4,460.8 825.9,481.1 826.5,497.7 827.0,509.9 827.5,517.5 828.0,520.0 828.5,516.6 829.0,506.5 829.5,490.2 830.0,468.4 830.5,442.1 831.0,412.3 831.5,380.4 832.0,347.8 832.5,316.0 833.0,286.2 833.5,259.8 834.0,238.0 834.5,221.7 835.0,211.7 835.5,208.2 836.0,211.0 836.5,219.0 837.0,232.1 837.5,249.7 838.0,271.4 838.5,296.4 839.0,323.7 839.5,352.6 840.0,381.9 840.5,410.8 841.0,438.1 841.5,463.1 842.0,484.8 842.5,502.4 843.0,515.5 843.5,523.5 844.0,526.2 844.5,523.6 845.0,515.5 845.5,502.5 846.0,484.9 846.5,463.3 847.0,438.4 847.5,411.1 848.0,382.4 848.5,353.1 849.0,324.4 849.5,297.1 850.0,272.2 850.5,250.6 851.0,233.0 851.5,220.0 852.0,211.9 852.5,209.2 853.0,212.6 853.5,222.6 854.0,238.6 854.6,260.2 855.1,286.2 855.6,315.6 856.1,347.0 856.6,379.2 857.1,410.7 857.7,440.1 858.2,466.1 858.7,487.6 859.2,503.7 859.7,513.6 860.2,517.0 860.8,514.4 861.2,506.6 861.8,493.8 862.2,476.6 862.8,455.5 863.2,431.2 863.8,404.6 864.2,376.5 864.8,348.0 865.2,319.9 865.8,293.3 866.2,269.0 866.8,247.9 867.2,230.7 867.8,217.9 868.2,210.1 868.8,207.5 869.2,210.5 869.8,219.4 870.2,233.8 870.8,253.3 871.2,276.9 871.8,304.0 872.2,333.3 872.8,363.8 873.2,394.2 873.8,423.5 874.2,450.6 874.8,474.2 875.2,493.7 875.8,508.1 876.2,517.0 876.8,520.0 877.3,516.9 877.8,507.6 878.3,492.4 878.8,472.1 879.3,447.3 879.8,419.1 880.4,388.4 880.9,356.5 881.4,324.6 881.9,293.9 882.4,265.7 882.9,240.9 883.5,220.6 884.0,205.4 884.5,196.1 885.0,193.0 885.5,196.0 886.0,205.1 886.5,219.7 887.1,239.4 887.6,263.4 888.1,290.8 888.6,320.6 889.1,351.5 889.6,382.4 890.2,412.2 890.7,439.6 891.2,463.6 891.7,483.3 892.2,497.9 892.7,507.0 893.2,510.0 893.8,507.1 894.2,498.4 894.8,484.3 895.2,465.4 895.8,442.3 896.2,416.0 896.8,387.5 897.2,357.8 897.8,328.0 898.2,299.5 898.8,273.2 899.2,250.1 899.8,231.2 900.2,217.1 900.8,208.4 901.2,205.5 901.8,208.2 902.3,216.1 902.8,229.1 903.3,246.5 903.8,268.0 904.3,292.7 904.9,319.7 905.4,348.2 905.9,377.3 906.4,405.8 906.9,432.8 907.4,457.5 907.9,479.0 908.5,496.4 909.0,509.4 909.5,517.3 910.0,520.0 910.5,516.5 911.0,506.1 911.5,489.3 912.0,466.8 912.5,439.6 913.0,408.8 913.5,375.9 914.0,342.3 914.5,309.4 915.0,278.7 915.5,251.5 916.0,229.0 916.5,212.2 917.0,201.8 917.5,198.2 918.0,201.0 918.5,209.0 919.0,222.1 919.5,239.8 920.0,261.6 920.5,286.6 921.0,314.0 921.5,342.9 922.0,372.3 922.5,401.2 923.0,428.7 923.5,453.7 924.0,475.4 924.5,493.1 925.0,506.2 925.5,514.3 926.0,517.0 926.5,513.5 927.0,503.3 927.5,486.8 928.0,464.6 928.5,437.9 929.0,407.7 929.5,375.3 930.0,342.2 930.5,309.8 931.0,279.6 931.5,252.9 932.0,230.7 932.5,214.2 933.0,204.0 933.5,200.5 934.0,203.2 934.5,211.2 935.0,224.2 935.5,241.8 936.0,263.4 936.5,288.2 937.0,315.4 937.5,344.1 938.0,373.4 938.5,402.1 939.0,429.3 939.5,454.1 940.0,475.7 940.5,493.3 941.0,506.3 941.5,514.3 942.0,517.0 942.5,514.2 943.0,506.0 943.5,492.7 944.1,474.6 944.6,452.4 945.1,426.9 945.6,399.0 946.1,369.5 946.6,339.5 947.1,310.0 947.7,282.1 948.2,256.6 948.7,234.4 949.2,216.3 949.7,203.0 950.2,194.8 950.8,192.0 951.3,195.5 951.8,205.8 952.3,222.5 952.8,244.8 953.3,271.8 953.9,302.3 954.4,334.9 954.9,368.3 955.4,401.0 955.9,431.4 956.4,458.4 957.0,480.8 957.5,497.4 958.0,507.8 958.5,511.2 959.0,508.6 959.5,500.5 960.0,487.5 960.5,469.9 961.0,448.3 961.5,423.4 962.0,396.1 962.5,367.4 963.0,338.1 963.5,309.4 964.0,282.1 964.5,257.2 965.0,235.6 965.5,218.0 966.0,205.0 966.5,196.9 967.0,194.2 967.5,197.7 968.0,207.9 968.5,224.4 969.1,246.5 969.6,273.2 970.1,303.3 970.6,335.6 971.1,368.6 971.6,400.9 972.2,431.1 972.7,457.8 973.2,479.8 973.7,496.4 974.2,506.6 974.8,510.0 975.3,507.0 975.8,498.1 976.3,483.7 976.8,464.3 977.3,440.7 977.8,413.8 978.4,384.5 978.9,354.1 979.4,323.7 979.9,294.5 980.4,267.5 980.9,243.9 981.5,224.5 982.0,210.1 982.5,201.2 983.0,198.2 983.5,201.1 984.0,209.5 984.5,223.1 985.1,241.5 985.6,263.8 986.1,289.3 986.6,317.0 987.1,345.8 987.6,374.5 988.2,402.2 988.7,427.7 989.2,450.0 989.7,468.4 990.2,482.0 990.7,490.4 991.2,493.2 991.8,490.4 992.3,481.8 992.8,467.9 993.3,449.3 993.8,426.5 994.3,400.6 994.9,372.4 995.4,343.1 995.9,313.8 996.4,285.7 996.9,259.7 997.4,237.0 998.0,218.3 998.5,204.4 999.0,195.9 999.5,193.0 1000.0,195.6 1000.5,203.2 1001.0,215.6 1001.5,232.3 1002.0,252.9 1002.5,276.5 1003.0,302.4 1003.5,329.7 1004.0,357.5 1004.5,384.8 1005.0,410.8 1005.5,434.4 1006.0,454.9 1006.5,471.7 1007.0,484.1 1007.5,491.7 1008.0,494.2 1008.6,488.0 1009.2,470.0 1009.8,440.0 1010.3,405.0 1010.6,380.0" fill="none" stroke="#1616a8" stroke-width="1" stroke-linejoin="round" shape-rendering="crispEdges"/>
<text x="54.3" y="112.8" font-size="13" font-family='"Liberation Sans", sans-serif' font-weight="normal" fill="#000" text-anchor="end" >400</text>
<text x="54.3" y="176.3" font-size="13" font-family='"Liberation Sans", sans-serif' font-weight="normal" fill="#000" text-anchor="end" >300</text>
<text x="54.3" y="238.3" font-size="13" font-family='"Liberation Sans", sans-serif' font-weight="normal" fill="#000" text-anchor="end" >200</text>
<text x="54.3" y="301.3" font-size="13" font-family='"Liberation Sans", sans-serif' font-weight="normal" fill="#000" text-anchor="end" >100</text>
<text x="54.3" y="363.3" font-size="13" font-family='"Liberation Sans", sans-serif' font-weight="normal" fill="#000" text-anchor="end" >0</text>
<text x="54.3" y="426.3" font-size="13" font-family='"Liberation Sans", sans-serif' font-weight="normal" fill="#000" text-anchor="end" >-100</text>
<text x="54.3" y="488.3" font-size="13" font-family='"Liberation Sans", sans-serif' font-weight="normal" fill="#000" text-anchor="end" >-200</text>
<text x="54.3" y="551.3" font-size="13" font-family='"Liberation Sans", sans-serif' font-weight="normal" fill="#000" text-anchor="end" >-300</text>
<text x="54.3" y="613.3" font-size="13" font-family='"Liberation Sans", sans-serif' font-weight="normal" fill="#000" text-anchor="end" >-400</text>
<text x="76.0" y="624.7" font-size="13" font-family='"Liberation Sans", sans-serif' font-weight="normal" fill="#000" text-anchor="middle" >32</text>
<text x="240.0" y="624.7" font-size="13" font-family='"Liberation Sans", sans-serif' font-weight="normal" fill="#000" text-anchor="middle" >36</text>
<text x="404.0" y="624.7" font-size="13" font-family='"Liberation Sans", sans-serif' font-weight="normal" fill="#000" text-anchor="middle" >40</text>
<text x="567.0" y="624.7" font-size="13" font-family='"Liberation Sans", sans-serif' font-weight="normal" fill="#000" text-anchor="middle" >44</text>
<text x="731.0" y="624.7" font-size="13" font-family='"Liberation Sans", sans-serif' font-weight="normal" fill="#000" text-anchor="middle" >48</text>
<text x="895.0" y="624.7" font-size="13" font-family='"Liberation Sans", sans-serif' font-weight="normal" fill="#000" text-anchor="middle" >52</text>
<text x="483" y="643" font-size="13" font-family='"Liberation Sans", sans-serif' font-weight="normal" fill="#000" text-anchor="start" textLength="57.5" lengthAdjust="spacingAndGlyphs" >Time (ms)</text>
<text transform="translate(16.2,368.5) rotate(-90)" font-size="13" font-family='"Liberation Sans", sans-serif' textLength="57.5" lengthAdjust="spacingAndGlyphs">Amplitude</text>
<rect x="290" y="650" width="1" height="74" fill="#aca899" />
<rect x="291" y="650" width="1" height="74" fill="#ffffff" />
<text x="59.5" y="667.5" font-size="11" font-family='"Liberation Sans", sans-serif' font-weight="normal" fill="#000" text-anchor="start" textLength="54" lengthAdjust="spacingAndGlyphs" >Максимум</text>
<text x="135.7" y="667.5" font-size="11" font-family='"Liberation Sans", sans-serif' font-weight="normal" fill="#000" text-anchor="start" textLength="63.5" lengthAdjust="spacingAndGlyphs" >Среднее Abs</text>
<text x="212.4" y="667.5" font-size="11" font-family='"Liberation Sans", sans-serif' font-weight="normal" fill="#000" text-anchor="start" textLength="47.6" lengthAdjust="spacingAndGlyphs" >Минимум</text>
<text x="12.6" y="687.5" font-size="11" font-family='"Liberation Sans", sans-serif' font-weight="normal" fill="#000" text-anchor="start" textLength="33.7" lengthAdjust="spacingAndGlyphs" >Левый</text>
<text x="12.6" y="712" font-size="11" font-family='"Liberation Sans", sans-serif' font-weight="normal" fill="#000" text-anchor="start" textLength="40" lengthAdjust="spacingAndGlyphs" >Правый</text>
<rect x="57" y="675" width="70" height="17" fill="#ede9e2" />
<rect x="57" y="675" width="70" height="1" fill="#aca899" />
<rect x="57" y="675" width="1" height="17" fill="#aca899" />
<rect x="126" y="675" width="1" height="17" fill="#ffffff" />
<rect x="57" y="691" width="70" height="1" fill="#ffffff" />
<text x="58.6" y="686.6" font-size="12.5" font-family='"Liberation Sans", sans-serif' font-weight="normal" fill="#000" text-anchor="start" textLength="28.7" lengthAdjust="spacingAndGlyphs" >32767</text>
<rect x="134" y="675" width="70" height="17" fill="#ede9e2" />
<rect x="134" y="675" width="70" height="1" fill="#aca899" />
<rect x="134" y="675" width="1" height="17" fill="#aca899" />
<rect x="203" y="675" width="1" height="17" fill="#ffffff" />
<rect x="134" y="691" width="70" height="1" fill="#ffffff" />
<text x="135.7" y="686.6" font-size="12.5" font-family='"Liberation Sans", sans-serif' font-weight="normal" fill="#000" text-anchor="start" textLength="29.3" lengthAdjust="spacingAndGlyphs" >11714</text>
<rect x="211.5" y="675" width="70.5" height="17" fill="#ede9e2" />
<rect x="211.5" y="675" width="70.5" height="1" fill="#aca899" />
<rect x="211.5" y="675" width="1" height="17" fill="#aca899" />
<rect x="281.0" y="675" width="1" height="17" fill="#ffffff" />
<rect x="211.5" y="691" width="70.5" height="1" fill="#ffffff" />
<text x="213.3" y="686.6" font-size="12.5" font-family='"Liberation Sans", sans-serif' font-weight="normal" fill="#000" text-anchor="start" textLength="32.8" lengthAdjust="spacingAndGlyphs" >-32768</text>
<rect x="57" y="700" width="70" height="17" fill="#ede9e2" />
<rect x="57" y="700" width="70" height="1" fill="#aca899" />
<rect x="57" y="700" width="1" height="17" fill="#aca899" />
<rect x="126" y="700" width="1" height="17" fill="#ffffff" />
<rect x="57" y="716" width="70" height="1" fill="#ffffff" />
<text x="58.6" y="711.6" font-size="12.5" font-family='"Liberation Sans", sans-serif' font-weight="normal" fill="#000" text-anchor="start" textLength="17.6" lengthAdjust="spacingAndGlyphs" >463</text>
<rect x="134" y="700" width="70" height="17" fill="#ede9e2" />
<rect x="134" y="700" width="70" height="1" fill="#aca899" />
<rect x="134" y="700" width="1" height="17" fill="#aca899" />
<rect x="203" y="700" width="1" height="17" fill="#ffffff" />
<rect x="134" y="716" width="70" height="1" fill="#ffffff" />
<text x="135.7" y="711.6" font-size="12.5" font-family='"Liberation Sans", sans-serif' font-weight="normal" fill="#000" text-anchor="start" textLength="17.3" lengthAdjust="spacingAndGlyphs" >134</text>
<rect x="211.5" y="700" width="70.5" height="17" fill="#ede9e2" />
<rect x="211.5" y="700" width="70.5" height="1" fill="#aca899" />
<rect x="211.5" y="700" width="1" height="17" fill="#aca899" />
<rect x="281.0" y="700" width="1" height="17" fill="#ffffff" />
<rect x="211.5" y="716" width="70.5" height="1" fill="#ffffff" />
<text x="213.3" y="711.6" font-size="12.5" font-family='"Liberation Sans", sans-serif' font-weight="normal" fill="#000" text-anchor="start" textLength="21.2" lengthAdjust="spacingAndGlyphs" >-420</text>
<rect x="653" y="729" width="62" height="14" fill="#ede9e2" />
<rect x="653" y="729" width="62" height="1" fill="#aca899" />
<rect x="653" y="729" width="1" height="14" fill="#aca899" />
<rect x="714" y="729" width="1" height="14" fill="#ffffff" />
<rect x="653" y="742" width="62" height="1" fill="#ffffff" />
<text x="655.7" y="739.2" font-size="11.5" font-family='"Liberation Sans", sans-serif' font-weight="normal" fill="#000" text-anchor="start" textLength="46.3" lengthAdjust="spacingAndGlyphs" >40.46  ms</text>
<rect x="718" y="729" width="81" height="14" fill="#ede9e2" />
<rect x="718" y="729" width="81" height="1" fill="#aca899" />
<rect x="718" y="729" width="1" height="14" fill="#aca899" />
<rect x="798" y="729" width="1" height="14" fill="#ffffff" />
<rect x="718" y="742" width="81" height="1" fill="#ffffff" />
<text x="721.7" y="739.2" font-size="11.5" font-family='"Liberation Sans", sans-serif' font-weight="normal" fill="#000" text-anchor="start" textLength="31.3" lengthAdjust="spacingAndGlyphs" >139.00</text>
<rect x="802" y="729" width="61" height="14" fill="#ede9e2" />
<rect x="802" y="729" width="61" height="1" fill="#aca899" />
<rect x="802" y="729" width="1" height="14" fill="#aca899" />
<rect x="862" y="729" width="1" height="14" fill="#ffffff" />
<rect x="802" y="742" width="61" height="1" fill="#ffffff" />
<text x="804" y="739.2" font-size="11.5" font-family='"Liberation Sans", sans-serif' font-weight="normal" fill="#000" text-anchor="start" textLength="23.5" lengthAdjust="spacingAndGlyphs" >0deg</text>
<rect x="887.5" y="729" width="60" height="14" fill="#ede9e2" />
<rect x="887.5" y="729" width="60" height="1" fill="#aca899" />
<rect x="887.5" y="729" width="1" height="14" fill="#aca899" />
<rect x="946.5" y="729" width="1" height="14" fill="#ffffff" />
<rect x="887.5" y="742" width="60" height="1" fill="#ffffff" />
<text x="889.3" y="739.2" font-size="11.5" font-family='"Liberation Sans", sans-serif' font-weight="normal" fill="#000" text-anchor="start" textLength="5.7" lengthAdjust="spacingAndGlyphs" >0</text>
<rect x="950.5" y="729" width="71" height="14" fill="#ede9e2" />
<rect x="950.5" y="729" width="71" height="1" fill="#aca899" />
<rect x="950.5" y="729" width="1" height="14" fill="#aca899" />
<rect x="1020.5" y="729" width="1" height="14" fill="#ffffff" />
<rect x="950.5" y="742" width="71" height="1" fill="#ffffff" />
<text x="953" y="739.2" font-size="11.5" font-family='"Liberation Sans", sans-serif' font-weight="normal" fill="#000" text-anchor="start" textLength="32" lengthAdjust="spacingAndGlyphs" >0Ohms</text>
<g transform="translate(25.5,747)" opacity="0.9"><path d="M3 1 q3 -2 6 0 l-1.5 7 q-3 -2 -6 0 Z M10 1.5 q3 2 6.5 0 l-1.5 7 q-3 2 -6.5 0 Z M1 10 q3 -2 6 0 l-1.5 7 q-3 -2 -6 0 Z M8 10.5 q3 2 6.5 0 l-1.5 7 q-3 2 -6.5 0 Z" fill="#7d93bd" stroke="#51658e" stroke-width="1.1"/></g>
<text x="66" y="760.2" font-size="16.5" font-family='"Liberation Serif", serif' font-weight="normal" fill="#f4f6fa" text-anchor="start" textLength="48" lengthAdjust="spacingAndGlyphs" stroke="#f4f6fa" stroke-width="0.45">Google</text>
<g><path d="M133.6 756.6 H144.6 A5.6 5.6 0 1 0 143.2 760.4" stroke="#2f8de6" stroke-width="3" fill="none"/><path d="M130.8 762.5 Q131.5 753 146 748.3" stroke="#f2b63a" stroke-width="1.7" fill="none"/><path d="M131.6 761 Q134 757 138 754" stroke="#f6d680" stroke-width="0.9" fill="none"/></g>
<g stroke-linejoin="miter"><path d="M160.6 750.2 L167 761.4 L157 761.4" fill="none" stroke="#4a4a10" stroke-width="3.6"/><path d="M161.4 749.6 L154 759.2 L163.4 759.2" fill="none" stroke="#10306a" stroke-width="3.4"/><path d="M160.6 750.2 L167 761.4 L157 761.4" fill="none" stroke="#f4e020" stroke-width="2.2"/><path d="M161.4 749.6 L154 759.2 L163.4 759.2" fill="none" stroke="#2f8de6" stroke-width="2"/></g>
<g><rect x="176.3" y="750.5" width="8" height="8.5" rx="1" fill="#dfe3ea" stroke="#8f99ad" stroke-width="0.9"/><path d="M181.5 750 q1 -2.5 4 -2.3 q4.5 0.2 5.5 3 v6.5 q-1 2 -4.5 2 h-5 Z" fill="#f2b48a" stroke="#b87a50" stroke-width="0.9"/><rect x="183" y="752" width="6.5" height="4.5" fill="#f6d4b8"/><path d="M181.5 759.3 h8.5 l-4.2 4.4 Z" fill="#3b8fe0" stroke="#2768b0" stroke-width="0.6"/></g>
<g><rect x="206.2" y="747.6" width="1.6" height="3" fill="#5a5a00"/><rect x="203.2" y="750.2" width="7.8" height="6" rx="1.2" fill="#ecec20" stroke="#5a5a00" stroke-width="1.1"/><rect x="201.6" y="756" width="11" height="5" rx="1" fill="#ecec20" stroke="#5a5a00" stroke-width="1.1"/><rect x="203.4" y="760.6" width="2.6" height="2.8" fill="#ecec20" stroke="#5a5a00" stroke-width="0.9"/><rect x="208.2" y="760.6" width="2.6" height="2.8" fill="#ecec20" stroke="#5a5a00" stroke-width="0.9"/><circle cx="207.1" cy="753" r="1.3" fill="none" stroke="#5a5a00" stroke-width="0.9"/><rect x="204.2" y="757.2" width="1.4" height="3" fill="#5a5a00"/><rect x="206.6" y="757.2" width="1.2" height="3" fill="#5a5a00"/><rect x="208.8" y="757.2" width="1.4" height="3" fill="#5a5a00"/></g>
<g><rect x="222.3" y="748.4" width="15.6" height="15" rx="2" fill="#1e1e1e" stroke="#555" stroke-width="0.6"/><path d="M225.6 753 q0 -3.2 4.6 -3.2 q4.6 0 4.6 3.2 q0 3.4 -2.4 6.4 q-1 2.2 -2.2 2.2 q-1.2 0 -2.2 -2.2 q-2.4 -3 -2.4 -6.4 Z" fill="#e4e4e4"/><path d="M226.8 754 l2.6 1.4 l-0.4 1.4 q-2 -0.6 -2.2 -2.8 Z M233.6 754 l-2.6 1.4 l0.4 1.4 q2 -0.6 2.2 -2.8 Z" fill="#1a1a1a"/></g>
<path d="M269.4 752.4 L274.4 756.6 L269.4 760.8 Z" fill="#8ea2c8" stroke="#ccd6ec" stroke-width="1" />
<rect x="284.5" y="746.5" width="154" height="19.5" rx="4" fill="url(#gab)" stroke="#44547c" stroke-width="1"/>
<g transform="translate(296,751)"><path d="M8 1.5 L10.5 0 L10.5 10.5 L8 9 Z" fill="#10c050" stroke="#002200" stroke-width="0.9"/><path d="M0.8 4.5 L5 3.5 L7 4.5 L7 8 L5 9 L2 8 L2 6.5 L0.8 6.5 Z" fill="#303030" stroke="#0a0a0a" stroke-width="0.8"/></g>
<text x="313" y="760.2" font-size="11.5" font-family='"Liberation Sans", sans-serif' font-weight="normal" fill="#f0f3fa" text-anchor="start" textLength="114.5" lengthAdjust="spacingAndGlyphs" >Speaker Workshop - […</text>
<g><path d="M453.8 748.5 h5 l1.2 1.4 h4.6 v11 h-10.8 Z" fill="#f2cc5e" stroke="#c49a30" stroke-width="0.9"/><rect x="455" y="751" width="8.6" height="9" fill="#f8dc80"/><path d="M459.2 752 q2.2 4.5 -0.6 8.5" stroke="#8a6a20" stroke-width="1.3" fill="none"/></g>
<text x="472" y="760" font-size="11.5" font-family='"Liberation Sans", sans-serif' font-weight="normal" fill="#f0f3fa" text-anchor="start" textLength="114" lengthAdjust="spacingAndGlyphs" >10.12.2010 Шкода С…</text>
<g><rect x="617" y="752.3" width="10.6" height="12" fill="#fafafa" stroke="#2a8ad8" stroke-width="1.6"/><rect x="619.2" y="755.5" width="2.6" height="6" fill="#a0a8b0"/><rect x="623" y="755" width="3" height="6.5" fill="#f07820"/><rect x="611.6" y="752" width="3" height="11.5" rx="1.3" fill="#38a838"/><circle cx="613.6" cy="749.5" r="2.6" fill="#f08030"/></g>
<text x="632" y="760" font-size="11.5" font-family='"Liberation Sans", sans-serif' font-weight="normal" fill="#f0f3fa" text-anchor="start" textLength="115.7" lengthAdjust="spacingAndGlyphs" >Твитер- мид 23 см по…</text>
<rect x="932" y="748.3" width="16" height="14.5" fill="#58709f" />
<text x="933.2" y="759.9" font-size="11.5" font-family='"Liberation Sans", sans-serif' font-weight="normal" fill="#f4f6fb" text-anchor="start" textLength="13" lengthAdjust="spacingAndGlyphs" >RU</text>
<rect x="961" y="747" width="60" height="18.6" rx="4.5" fill="url(#gtr)" stroke="#4b5b82" stroke-width="1.1"/>
<path d="M969.8 752.2 L964.6 756.5 L969.8 760.8 Z" fill="none" stroke="#d4dcee" stroke-width="1.1" />
<text x="983.5" y="759.9" font-size="11.5" font-family='"Liberation Sans", sans-serif' font-weight="normal" fill="#f4f6fb" text-anchor="start" textLength="26.7" lengthAdjust="spacingAndGlyphs" >13:53</text>
</svg>
</div></body></html>
